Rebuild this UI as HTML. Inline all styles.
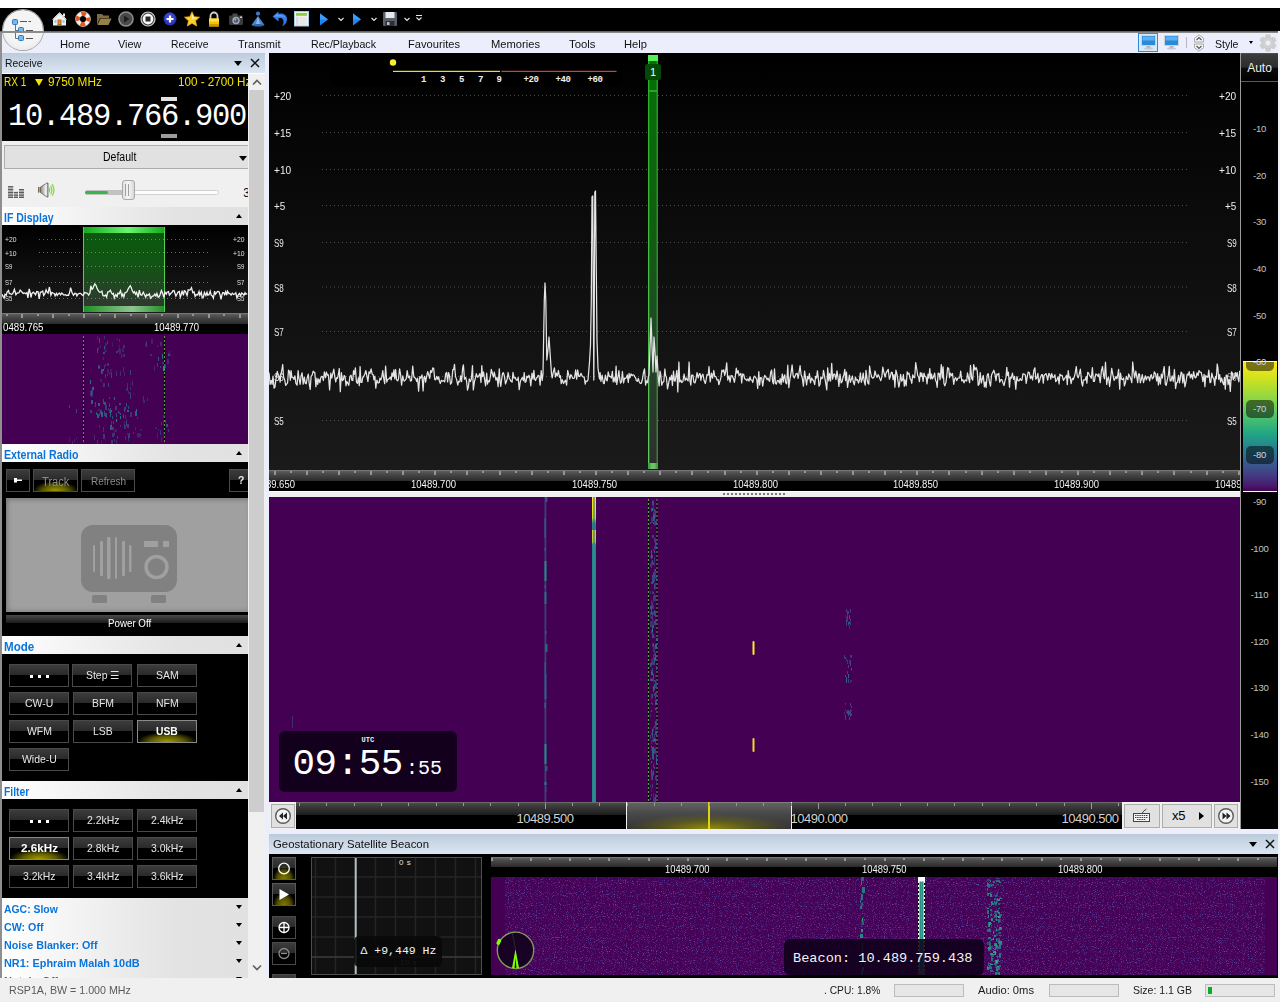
<!DOCTYPE html>
<html><head><meta charset="utf-8"><title>SDR Console</title>
<style>
html,body{margin:0;padding:0;}
body{width:1280px;height:1002px;overflow:hidden;background:#fff;font-family:"Liberation Sans",sans-serif;font-size:11px;color:#000;position:relative;}
.a{position:absolute;}
.mono{font-family:"Liberation Mono",monospace;}
.hdr{background:linear-gradient(#bccbdc,#dbe6f2);}
.sec{background:linear-gradient(90deg,#ffffff,#e3e3e3 70%,#e1e1e1);color:#0a74da;font-weight:bold;font-size:12px;}
.sec span{position:absolute;left:1px;top:4px;white-space:nowrap;transform-origin:0 0}
.tri-up{position:absolute;width:0;height:0;border-left:3px solid transparent;border-right:3px solid transparent;border-bottom:4px solid #000;}
.tri-dn{position:absolute;width:0;height:0;border-left:3px solid transparent;border-right:3px solid transparent;border-top:4px solid #000;}
.btn{position:absolute;box-sizing:border-box;border:1px solid #4a4a4a;background:linear-gradient(#3c3c3c 0,#2a2a2a 46%,#000 50%,#000 100%);color:#e6e6e6;font-size:11px;letter-spacing:-0.2px;text-align:center;}
.btn.on{border-color:#8a8a8a;color:#fff;font-weight:bold;}
.glow{position:absolute;left:0;right:0;bottom:0;height:48%;background:radial-gradient(ellipse 52% 100% at 50% 100%,rgba(170,165,0,.95),rgba(135,130,0,.7) 55%,rgba(90,90,0,0) 100%);}
.btn b,.btn i{position:relative;font-style:normal}
.lab{position:absolute;color:#e8e8e8;font-size:11px;white-space:nowrap}
.wl{position:absolute;color:#f2f2f2;font-size:11px;white-space:nowrap;transform:translateX(-50%);letter-spacing:-0.2px}
.sb{position:absolute;box-sizing:border-box;border:1px solid #bcbcbc;background:#e6e6e6;height:13px;top:6px}
</style></head><body>
<div class="a" style="left:0;top:8px;width:1280px;height:24px;background:#000"></div><div class="a" style="left:0;top:31px;width:1280px;height:22px;background:#eceefb"></div><div class="a" style="left:0;top:31px;width:1280px;height:2px;background:linear-gradient(#555,#9a9a9a)"></div><div class="a" style="left:0;top:53px;width:1280px;height:949px;background:#eceefb"></div><div class="a" style="left:0;top:32px;width:2px;height:946px;background:#8f8f8f"></div><div class="a" style="left:3px;top:10px;width:40px;height:40px;border-radius:50%;background:radial-gradient(circle at 50% 40%,#f4f4f4 60%,#dedede);box-shadow:0 0 0 1px #a8a8a8"></div><svg class="a" style="left:10px;top:16px" width="26" height="28" viewBox="0 0 26 28">
<path d="M5.5 8 V22.5 H9 M5.5 14.5 H9" stroke="#707070" fill="none" stroke-width="1"/>
<rect x="2.5" y="3.500" width="5" height="5" rx="1" fill="#7db7e8" stroke="#2e79c7"/>
<rect x="8.500" y="11.500" width="5" height="5" rx="1" fill="#7db7e8" stroke="#2e79c7"/>
<rect x="8.500" y="19.500" width="5" height="5" rx="1" fill="#7db7e8" stroke="#2e79c7"/>
<path d="M10 5.500 H17 M18.500 5.500 H21 M16 14.500 H23 M16 22.500 H23" stroke="#555" stroke-width="1"/>
</svg><div class="a" style="left:2px;top:31px;width:42px;height:1.500px;background:#8c8c8c"></div><svg class="a" style="left:52.0px;top:11px" width="16" height="16" viewBox="0 0 16 16"><path d="M1 8.500 L7.500 2 L14 8.500 V14.500 H1 Z" fill="#f1f0ea"/><path d="M0.500 8.500 L7.500 1.500 L14.500 8.500" stroke="#d8d6cc" fill="none"/><rect x="11" y="2.500" width="2" height="3" fill="#e8e8e8"/>
<rect x="5.500" y="8.500" width="4" height="5.500" fill="#c8641c"/><rect x="6.500" y="9.500" width="2" height="3.500" fill="#e08a3a"/><rect x="2.500" y="9" width="2" height="3" fill="#9cc3e6"/><rect x="10.500" y="9" width="2" height="3" fill="#9cc3e6"/><rect x="5.500" y="13.500" width="4" height="1" fill="#5a8a2a"/></svg><svg class="a" style="left:74.5px;top:11px" width="16" height="16" viewBox="0 0 16 16"><circle cx="8" cy="8" r="5.300" fill="none" stroke="#f1f1f1" stroke-width="4.400"/>
<circle cx="8" cy="8" r="5.300" fill="none" stroke="#e4561a" stroke-width="4.400" stroke-dasharray="4.700 3.625" stroke-dashoffset="2.350"/>
<circle cx="8" cy="8" r="7.500" fill="none" stroke="#c8c8c8" stroke-width=".5"/></svg><svg class="a" style="left:96.0px;top:11px" width="16" height="16" viewBox="0 0 16 16"><path d="M1 3 H6 L7.500 4.500 H13 V7 H4 L1 14 Z" fill="#7d6c3c"/><path d="M4.500 7.500 H15.500 L12.500 14 H1.500 Z" fill="#94824a"/></svg><svg class="a" style="left:118.0px;top:11px" width="16" height="16" viewBox="0 0 16 16"><circle cx="8" cy="8" r="7" fill="#4a4a4a" stroke="#8c8c8c" stroke-width="1.600"/><path d="M6 4.500 L11.500 8 L6 11.500 Z" fill="#1e1e1e"/></svg><svg class="a" style="left:140.0px;top:11px" width="16" height="16" viewBox="0 0 16 16"><circle cx="8" cy="8" r="7" fill="#3a3a3a" stroke="#d0d0d0" stroke-width="1.200"/><circle cx="8" cy="8" r="5.400" fill="#fafafa"/><rect x="5.500" y="5.500" width="5" height="5" fill="#2a2a2a"/></svg><svg class="a" style="left:162.0px;top:11px" width="16" height="16" viewBox="0 0 16 16"><circle cx="8" cy="8" r="6.500" fill="#2b35b8"/><circle cx="8" cy="6.500" r="5" fill="#4552d8" opacity=".6"/><path d="M8 4.500 V11.500 M4.500 8 H11.500" stroke="#fff" stroke-width="2.200"/></svg><svg class="a" style="left:184.0px;top:11px" width="16" height="16" viewBox="0 0 16 16"><path d="M8 0.800 L10.200 5.700 L15.500 6.200 L11.500 9.800 L12.700 15 L8 12.300 L3.300 15 L4.500 9.800 L0.500 6.200 L5.800 5.700 Z" fill="#ffd12e" stroke="#f0a400" stroke-width=".8"/><path d="M8 2.500 L9.500 6.300 L13.500 6.800 L8 8 Z" fill="#fff3a8"/></svg><svg class="a" style="left:206.0px;top:11px" width="16" height="16" viewBox="0 0 16 16"><path d="M4.500 8 V5 A3.500 3.500 0 0 1 11.500 5 V8" stroke="#cfcfcf" stroke-width="1.800" fill="none"/><rect x="3" y="7.500" width="10" height="8" rx="1" fill="#f2c400"/><rect x="3" y="7.500" width="10" height="3" fill="#ffe04a"/><rect x="3" y="13" width="10" height="2.500" fill="#c99a00"/></svg><svg class="a" style="left:228.0px;top:11px" width="16" height="16" viewBox="0 0 16 16"><rect x="1" y="4.500" width="14" height="9.500" rx="1.500" fill="#3c3c3c"/><rect x="4.500" y="2.500" width="5" height="3" fill="#4a4a4a"/><rect x="12" y="5.500" width="2" height="1.500" fill="#cfcfcf"/><circle cx="8" cy="9.500" r="3.700" fill="#a8a8a8"/><circle cx="8" cy="9.500" r="2.300" fill="#3d5f8a"/><circle cx="7.200" cy="8.700" r=".8" fill="#cfe0f5"/></svg><svg class="a" style="left:250.0px;top:11px" width="16" height="16" viewBox="0 0 16 16"><circle cx="8" cy="2.600" r="2.100" fill="#3f78c4"/><path d="M8 5 L14.500 14 Q8 16.500 1.500 14 Z" fill="#4a86d2"/><path d="M8 5.500 L10 13 L8 14.500 L6 13 Z" fill="#8db6e8"/><ellipse cx="8" cy="14.300" rx="5.500" ry="1.200" fill="#2f62aa"/></svg><svg class="a" style="left:272.0px;top:11px" width="16" height="16" viewBox="0 0 16 16"><path d="M0.500 5.500 L6.500 0.500 L6.500 3 C11 1.500 15.500 4.500 15 9 C14.600 12 12.500 14.200 10 15.500 C11.800 12.800 12 10.200 10.800 8.400 C9.800 7 8.200 6.800 6.500 7.200 L6.500 10.500 Z" fill="#2f7be8"/><path d="M2 5.500 L6 2 L6 4 C10 3 13.500 5 14 8 C12.500 5.500 9.500 5 6.500 5.800 Z" fill="#5b9bf5"/></svg><svg class="a" style="left:294.0px;top:11px" width="16" height="16" viewBox="0 0 16 16"><rect x="0.500" y="0.500" width="14" height="14.500" fill="#f2f2f2" stroke="#9ecbe8"/><rect x="2" y="2" width="11" height="2.800" fill="#86d23c"/><rect x="2" y="5.800" width="2.500" height="8" fill="#dcdcdc"/><rect x="5.500" y="5.800" width="7.500" height="8" fill="#e8e8e8"/></svg><svg class="a" style="left:316.0px;top:11px" width="16" height="16" viewBox="0 0 16 16"><path d="M4 2.500 L12 8.500 L4 14.500 Z" fill="#1f86f0"/><path d="M4 2.500 L12 8.500 L4 8.500 Z" fill="#3b9cff"/></svg><svg class="a" style="left:349.0px;top:11px" width="16" height="16" viewBox="0 0 16 16"><path d="M4 2.500 L12 8.500 L4 14.500 Z" fill="#1f86f0"/><path d="M4 2.500 L12 8.500 L4 8.500 Z" fill="#3b9cff"/></svg><svg class="a" style="left:336.5px;top:15px" width="8" height="8" viewBox="0 0 8 8"><path d="M1.500 3 L4 5.500 L6.500 3" stroke="#e8e8e8" fill="none" stroke-width="1.100"/></svg><svg class="a" style="left:369.5px;top:15px" width="8" height="8" viewBox="0 0 8 8"><path d="M1.500 3 L4 5.500 L6.500 3" stroke="#e8e8e8" fill="none" stroke-width="1.100"/></svg><svg class="a" style="left:402.5px;top:15px" width="8" height="8" viewBox="0 0 8 8"><path d="M1.500 3 L4 5.500 L6.500 3" stroke="#e8e8e8" fill="none" stroke-width="1.100"/></svg><svg class="a" style="left:382.0px;top:11px" width="16" height="16" viewBox="0 0 16 16"><rect x="1" y="1" width="14" height="14" rx="1" fill="#5a6068"/><rect x="3.500" y="1" width="9" height="6" fill="#e6e9ee"/><rect x="3.500" y="10" width="9" height="5" fill="#2c3036"/><rect x="5" y="11" width="2.500" height="3" fill="#b8bcc4"/></svg><svg class="a" style="left:414.5px;top:14px" width="8" height="8" viewBox="0 0 8 8"><path d="M1 1.500 H7" stroke="#e8e8e8" stroke-width="1"/><path d="M1.500 3.500 L4 6 L6.500 3.500" stroke="#e8e8e8" fill="none" stroke-width="1.100"/></svg><div class="a" style="left:60.00px;top:38px;font-size:11.5px;color:#111;white-space:nowrap;transform-origin:0 0;transform:scaleX(0.9780);">Home</div><div class="a" style="left:118.00px;top:38px;font-size:11.5px;color:#111;white-space:nowrap;transform-origin:0 0;transform:scaleX(0.9507);">View</div><div class="a" style="left:171.00px;top:38px;font-size:11.5px;color:#111;white-space:nowrap;transform-origin:0 0;transform:scaleX(0.9026);">Receive</div><div class="a" style="left:238.00px;top:38px;font-size:11.5px;color:#111;white-space:nowrap;transform-origin:0 0;transform:scaleX(0.9594);">Transmit</div><div class="a" style="left:311.00px;top:38px;font-size:11.5px;color:#111;white-space:nowrap;transform-origin:0 0;transform:scaleX(0.9245);">Rec/Playback</div><div class="a" style="left:407.50px;top:38px;font-size:11.5px;color:#111;white-space:nowrap;transform-origin:0 0;transform:scaleX(0.9686);">Favourites</div><div class="a" style="left:490.50px;top:38px;font-size:11.5px;color:#111;white-space:nowrap;transform-origin:0 0;transform:scaleX(0.9707);">Memories</div><div class="a" style="left:568.50px;top:38px;font-size:11.5px;color:#111;white-space:nowrap;transform-origin:0 0;transform:scaleX(0.9871);">Tools</div><div class="a" style="left:624.00px;top:38px;font-size:11.5px;color:#111;white-space:nowrap;transform-origin:0 0;transform:scaleX(0.9725);">Help</div><div class="a" style="left:1138px;top:33px;width:20px;height:19px;box-sizing:border-box;border:1px solid #2d89e0;background:#d8e9fa"></div><svg class="a" style="left:1141px;top:35px" width="15" height="15" viewBox="0 0 15 15"><rect x="0.500" y="0.500" width="14" height="10" fill="#2a8ad8" stroke="#c9d4de"/><rect x="1.500" y="1.500" width="12" height="4" fill="#5ab0f0"/><rect x="5.500" y="11" width="4" height="2" fill="#b0b6bc"/><ellipse cx="7.500" cy="13.500" rx="4.500" ry="1" fill="#c4c9ce"/></svg><svg class="a" style="left:1164px;top:35px" width="15" height="15" viewBox="0 0 15 15"><rect x="0.500" y="0.500" width="14" height="10" fill="#2a8ad8" stroke="#c9d4de"/><rect x="1.500" y="1.500" width="12" height="4" fill="#5ab0f0"/><rect x="5.500" y="11" width="4" height="2" fill="#b0b6bc"/><ellipse cx="7.500" cy="13.500" rx="4.500" ry="1" fill="#c4c9ce"/></svg><div class="a" style="left:1186px;top:37px;width:1px;height:11px;background:#b5b5c0"></div><svg class="a" style="left:1193px;top:34px" width="12" height="18" viewBox="0 0 12 18"><path d="M6 .8 L10.500 4.200 V8 H1.500 V4.200 Z M6 17.200 L10.500 13.800 V10 H1.500 V13.800 Z" fill="#f4f4f4" stroke="#9a9a9a" stroke-width=".8"/><path d="M3.500 6 L6 3.500 L8.500 6 M3.500 12 L6 14.500 L8.500 12" stroke="#555" fill="none" stroke-width="1.100"/></svg><div class="a" style="left:1215.00px;top:38px;font-size:11.5px;color:#111;white-space:nowrap;transform-origin:0 0;transform:scaleX(0.9192);">Style</div><svg class="a" style="left:1259px;top:34px" width="18" height="18" viewBox="0 0 18 18"><g transform="translate(9 9)" fill="#d2d2d2" stroke="#bcbcbc" stroke-width=".5"><rect x="-2.300" y="-8.200" width="4.600" height="5" rx="1" transform="rotate(0)"/><rect x="-2.300" y="-8.200" width="4.600" height="5" rx="1" transform="rotate(60)"/><rect x="-2.300" y="-8.200" width="4.600" height="5" rx="1" transform="rotate(120)"/><rect x="-2.300" y="-8.200" width="4.600" height="5" rx="1" transform="rotate(180)"/><rect x="-2.300" y="-8.200" width="4.600" height="5" rx="1" transform="rotate(240)"/><rect x="-2.300" y="-8.200" width="4.600" height="5" rx="1" transform="rotate(300)"/><circle r="5.900"/><circle r="2.900" fill="#eceefb" stroke="#c4c4c4"/></g></svg><div class="tri-dn" style="left:1248.800px;top:41px;border-left-width:2.800px;border-right-width:2.800px;border-top-width:3.200px"></div><div class="a hdr" style="left:2px;top:53px;width:263px;height:20px"></div><div class="a" style="left:4.50px;top:57px;font-size:11.5px;color:#111;white-space:nowrap;transform-origin:0 0;transform:scaleX(0.9002);">Receive</div><div class="tri-dn" style="left:234px;top:61px;border-left-width:4.500px;border-right-width:4.500px;border-top-width:5px"></div><svg class="a" style="left:250px;top:58px" width="10" height="10" viewBox="0 0 10 10"><path d="M1 1 L9 9 M9 1 L1 9" stroke="#111" stroke-width="1.500"/></svg><div class="a" style="left:2px;top:73px;width:263px;height:905px;background:#f0f0f0"></div><div class="a" style="left:2px;top:73px;width:263px;height:1px;background:#fff"></div><div class="a" style="left:2px;top:74px;width:246px;height:67px;background:#000"></div><div class="a" style="left:3.60px;top:75px;font-size:12px;color:#f2e200;white-space:nowrap;transform-origin:0 0;transform:scaleX(0.8397);">RX 1</div><div class="a" style="left:34.500px;top:78.500px;width:0;height:0;border-left:4.700px solid transparent;border-right:4.700px solid transparent;border-top:7.500px solid #f2e200"></div><div class="a" style="left:47.50px;top:75px;font-size:12px;color:#f2e200;white-space:nowrap;transform-origin:0 0;transform:scaleX(0.9838);">9750 MHz</div><div class="a" style="left:170px;top:74px;width:78px;height:18px;overflow:hidden"><div class="a" style="left:8.30px;top:1px;font-size:12px;color:#f2e200;white-space:nowrap;transform-origin:0 0;transform:scaleX(0.9730);">100 - 2700 Hz</div></div><div class="a mono" id="bigf" style="left:8px;top:98.500px;font-size:30.500px;line-height:36px;color:#fff;letter-spacing:-1.300px;white-space:nowrap">10.489.766.900</div><div class="a" style="left:161px;top:97px;width:16px;height:4px;background:#e2e2e2"></div><div class="a" style="left:161px;top:134px;width:16px;height:4px;background:#9c9c9c"></div><div class="a" style="left:4px;top:145px;width:250px;height:24px;box-sizing:border-box;border:1px solid #adadad;background:#e1e1e1"></div><div class="a" style="left:102.70px;top:150px;font-size:12px;color:#000;white-space:nowrap;transform-origin:0 0;transform:scaleX(0.8759);">Default</div><div class="tri-dn" style="left:239px;top:156px;border-left-width:4.500px;border-right-width:4.500px;border-top-width:5px"></div><svg class="a" style="left:8px;top:185px" width="17" height="14" viewBox="0 0 17 14"><rect x="0" y="1.1" width="5.2" height="11.9" fill="#b4b4b4"/><rect x="0" y="1.15" width="5.2" height="1.100" fill="#5a5a5a"/><rect x="0" y="4.05" width="5.2" height="1.100" fill="#5a5a5a"/><rect x="0" y="6.95" width="5.2" height="1.100" fill="#5a5a5a"/><rect x="0" y="9.649999999999999" width="5.2" height="1.100" fill="#5a5a5a"/><rect x="0" y="11.85" width="5.2" height="1.100" fill="#5a5a5a"/><rect x="6" y="6.9" width="4" height="6.1000000000000005" fill="#b4b4b4"/><rect x="6" y="6.95" width="4" height="1.100" fill="#5a5a5a"/><rect x="6" y="9.649999999999999" width="4" height="1.100" fill="#5a5a5a"/><rect x="6" y="11.85" width="4" height="1.100" fill="#5a5a5a"/><rect x="11" y="3.9999999999999996" width="5" height="9.0" fill="#b4b4b4"/><rect x="11" y="4.05" width="5" height="1.100" fill="#5a5a5a"/><rect x="11" y="6.95" width="5" height="1.100" fill="#5a5a5a"/><rect x="11" y="9.649999999999999" width="5" height="1.100" fill="#5a5a5a"/><rect x="11" y="11.85" width="5" height="1.100" fill="#5a5a5a"/></svg><svg class="a" style="left:37px;top:182px" width="19" height="17" viewBox="0 0 19 17">
<defs><linearGradient id="spk" x1="0" x2="1"><stop offset="0" stop-color="#8a8a8a"/><stop offset=".45" stop-color="#c8c8c8"/><stop offset=".75" stop-color="#fafafa"/><stop offset="1" stop-color="#9a9a9a"/></linearGradient></defs>
<rect x="1" y="5" width="3" height="5.600" rx=".8" fill="#e89a10"/><rect x="1" y="5" width="1" height="5.600" fill="#7a6a50"/>
<path d="M3.500 5 L10 1 H11 V15 H10 L3.500 10.600 Z" fill="url(#spk)" stroke="#5c5c5c" stroke-width=".8"/>
<path d="M12.200 6.200 Q13.400 8 12.200 9.800 M13.800 4.200 Q16 8 13.800 11.800 M15.300 2.600 Q18.600 8 15.300 13.400" stroke="#7bdc38" fill="none" stroke-width="1.200" stroke-linecap="round"/></svg><div class="a" style="left:85px;top:190px;width:134px;height:5px;box-sizing:border-box;border:1px solid #d0d0d0;border-radius:3px;background:#fdfdfd"></div><div class="a" style="left:85px;top:190px;width:40px;height:5px;border-radius:3px;background:#c2c2c2"></div><div class="a" style="left:85px;top:191px;width:23px;height:3px;border-radius:2px;background:#39b54a"></div><div class="a" style="left:121.500px;top:180px;width:13px;height:20px;box-sizing:border-box;border:1px solid #a8a8a8;border-radius:3px;background:linear-gradient(90deg,#e2e2e2,#f6f6f6 50%,#d8d8d8)"></div><div class="a" style="left:125px;top:184px;width:1px;height:12px;background:#a0a0a0"></div><div class="a" style="left:128px;top:184px;width:1px;height:12px;background:#a0a0a0"></div><div class="a" style="left:243.200px;top:186px;width:4.800px;overflow:hidden;font-size:12px;color:#111">3</div><div class="a sec" style="left:2px;top:207px;width:246px;height:18px"><span style="left:1.600px;transform:scaleX(0.8751)">IF Display</span><div class="tri-up" style="left:234px;top:7px"></div></div><div class="a sec" style="left:2px;top:444px;width:246px;height:18px"><span style="left:1.600px;transform:scaleX(0.8867)">External Radio</span><div class="tri-up" style="left:234px;top:7px"></div></div><div class="a sec" style="left:2px;top:636px;width:246px;height:18px"><span style="left:1.600px;transform:scaleX(0.9640)">Mode</span><div class="tri-up" style="left:234px;top:7px"></div></div><div class="a sec" style="left:2px;top:781px;width:246px;height:18px"><span style="left:1.600px;transform:scaleX(0.8590)">Filter</span><div class="tri-up" style="left:234px;top:7px"></div></div><div class="a" style="left:2px;top:225px;width:246px;height:88px;background:linear-gradient(#000,#1b1b1b);overflow:hidden"><svg class="a" style="left:0;top:0" width="246" height="88" viewBox="2 225 246 88"><rect x="83" y="233" width="82" height="73" fill="#0f6a12" opacity=".82"/><defs><linearGradient id="gfade" x1="0" x2="0" y1="0" y2="1"><stop offset="0" stop-color="#0a5a0a" stop-opacity="0"/><stop offset=".55" stop-color="#2a3a2a" stop-opacity=".35"/><stop offset="1" stop-color="#343434" stop-opacity=".92"/></linearGradient><linearGradient id="gtop" x1="0" x2="1"><stop offset="0" stop-color="#12a81a"/><stop offset=".55" stop-color="#6cf56c"/><stop offset="1" stop-color="#12a81a"/></linearGradient><linearGradient id="gbot" x1="0" x2="1"><stop offset="0" stop-color="#1f8f25"/><stop offset=".6" stop-color="#8fc48f"/><stop offset="1" stop-color="#1f8f25"/></linearGradient></defs><rect x="83" y="233" width="82" height="73" fill="url(#gfade)"/><rect x="83" y="227" width="82" height="6" fill="url(#gtop)"/><rect x="83" y="306" width="82" height="6" fill="url(#gbot)"/><rect x="83" y="227" width="1" height="85" fill="#52d152"/><rect x="164" y="227" width="1" height="85" fill="#52d152"/><line x1="39" y1="239.5" x2="209" y2="239.5" stroke="#a8a8a8" stroke-width="1" stroke-dasharray="1 3" opacity="0.6"/><line x1="39" y1="252.5" x2="209" y2="252.5" stroke="#a8a8a8" stroke-width="1" stroke-dasharray="1 3" opacity="0.6"/><line x1="39" y1="266.5" x2="209" y2="266.5" stroke="#a8a8a8" stroke-width="1" stroke-dasharray="1 3" opacity="0.6"/><line x1="39" y1="282.5" x2="209" y2="282.5" stroke="#a8a8a8" stroke-width="1" stroke-dasharray="1 3" opacity="0.6"/><line x1="39" y1="298.5" x2="209" y2="298.5" stroke="#a8a8a8" stroke-width="1" stroke-dasharray="1 3" opacity="0.6"/><path d="M2.0 294.2 L3.2 296.6 L4.1 298.0 L5.0 294.3 L6.2 295.2 L7.1 292.0 L8.5 290.6 L9.3 293.5 L10.5 293.8 L11.7 294.5 L13.1 292.9 L14.4 289.4 L15.9 294.7 L16.8 293.3 L18.0 292.8 L19.0 292.7 L20.2 290.1 L21.7 291.7 L23.2 293.4 L24.6 292.9 L25.8 293.7 L27.0 292.6 L27.9 297.9 L29.2 288.9 L30.2 293.0 L31.0 297.5 L31.8 293.6 L33.3 292.2 L34.8 293.7 L35.6 294.8 L36.7 291.6 L38.1 291.9 L39.2 298.9 L40.3 292.3 L41.6 291.8 L42.7 291.0 L43.7 295.4 L44.9 293.7 L46.1 289.9 L47.0 292.0 L48.1 293.2 L49.4 287.0 L50.9 295.2 L52.0 292.5 L53.0 293.0 L54.2 293.4 L55.1 295.9 L56.4 293.5 L57.3 295.4 L58.4 293.7 L59.5 293.1 L60.6 294.8 L61.8 293.0 L63.0 294.2 L63.9 295.1 L65.3 294.7 L66.5 295.6 L67.6 295.2 L68.6 295.3 L69.7 292.1 L70.6 287.7 L72.0 292.5 L73.5 295.3 L74.9 293.3 L76.1 293.5 L76.9 295.9 L77.9 294.2 L79.2 293.4 L80.6 293.3 L81.9 294.8 L83.1 295.6 L84.6 292.5 L86.0 292.8 L87.3 293.2 L88.7 295.1 L90.0 292.9 L90.8 285.7 L92.0 289.4 L92.8 288.6 L93.7 286.3 L94.8 283.9 L96.1 285.6 L97.1 288.6 L98.2 290.5 L99.4 292.1 L100.6 292.2 L101.9 291.2 L102.9 295.5 L104.2 296.0 L105.6 295.0 L106.6 297.0 L107.8 291.8 L109.1 291.7 L110.4 290.3 L111.6 293.2 L112.5 294.1 L113.4 293.4 L114.3 298.0 L115.7 294.6 L117.1 296.6 L117.9 293.2 L119.1 293.8 L120.5 290.8 L121.9 296.4 L122.8 294.0 L123.9 296.9 L125.0 292.7 L126.1 292.5 L127.0 291.7 L128.2 288.8 L129.1 287.3 L130.3 285.7 L131.3 287.8 L132.2 290.6 L133.5 292.9 L134.5 291.8 L135.6 294.3 L136.6 292.4 L138.1 297.3 L139.3 290.1 L140.5 294.8 L141.8 295.3 L143.3 292.3 L144.3 294.3 L145.7 297.3 L146.7 294.6 L148.0 295.5 L149.4 293.9 L150.5 298.2 L151.4 297.3 L152.4 296.2 L153.7 295.9 L154.8 294.1 L156.0 296.0 L156.9 293.4 L158.2 297.3 L159.1 296.8 L160.1 294.5 L161.4 290.5 L162.8 293.7 L164.0 297.5 L164.9 292.0 L166.2 294.1 L167.1 292.2 L168.5 291.6 L169.4 295.1 L170.7 293.5 L171.9 292.6 L172.8 290.8 L174.0 290.6 L175.1 293.8 L175.9 296.1 L176.9 294.2 L178.0 292.1 L179.3 291.5 L180.3 297.2 L181.2 294.6 L182.1 290.7 L183.4 295.4 L184.3 290.8 L185.3 291.3 L186.3 293.5 L187.1 295.5 L188.2 289.8 L189.4 290.1 L190.4 289.7 L191.5 287.7 L192.8 292.7 L194.0 291.9 L195.1 296.4 L196.2 294.6 L197.7 294.9 L199.0 291.5 L199.8 295.2 L201.3 292.1 L202.2 297.8 L203.4 297.0 L204.4 292.5 L205.9 295.5 L207.0 292.3 L207.8 295.2 L209.0 294.7 L210.2 291.3 L211.3 295.4 L212.4 295.9 L213.4 298.1 L214.6 291.2 L215.5 294.2 L216.5 292.9 L217.4 291.6 L218.3 291.4 L219.1 292.0 L220.0 294.7 L221.0 299.4 L221.9 294.9 L222.8 292.6 L223.7 292.7 L224.7 294.6 L225.7 291.7 L226.7 295.2 L227.5 291.3 L229.0 293.7 L229.9 293.4 L231.1 295.1 L232.3 293.2 L233.7 294.5 L234.9 293.8 L235.8 292.9 L236.9 297.9 L238.1 295.2 L239.4 293.4 L240.6 295.8 L241.6 293.1 L242.7 293.8 L244.0 295.3 L245.0 292.8 L245.8 294.1 L247.2 293.6" stroke="#f2f2f2" stroke-width="1.300" fill="none"/></svg><div class="a" style="left:2.50px;top:9.5px;font-size:7.5px;color:#e0e0e0;white-space:nowrap;transform-origin:0 0;transform:scaleX(0.9040);">+20</div><div class="a" style="left:230.50px;top:9.5px;font-size:7.5px;color:#e0e0e0;white-space:nowrap;transform-origin:0 0;transform:scaleX(0.9040);">+20</div><div class="a" style="left:2.50px;top:23.5px;font-size:7.5px;color:#e0e0e0;white-space:nowrap;transform-origin:0 0;transform:scaleX(0.9040);">+10</div><div class="a" style="left:230.50px;top:23.5px;font-size:7.5px;color:#e0e0e0;white-space:nowrap;transform-origin:0 0;transform:scaleX(0.9040);">+10</div><div class="a" style="left:2.50px;top:36.5px;font-size:7.5px;color:#e0e0e0;white-space:nowrap;transform-origin:0 0;transform:scaleX(0.7958);">S9</div><div class="a" style="left:234.70px;top:36.5px;font-size:7.5px;color:#e0e0e0;white-space:nowrap;transform-origin:0 0;transform:scaleX(0.7958);">S9</div><div class="a" style="left:2.50px;top:52.5px;font-size:7.5px;color:#e0e0e0;white-space:nowrap;transform-origin:0 0;transform:scaleX(0.7958);">S7</div><div class="a" style="left:234.70px;top:52.5px;font-size:7.5px;color:#e0e0e0;white-space:nowrap;transform-origin:0 0;transform:scaleX(0.7958);">S7</div><div class="a" style="left:2.50px;top:68.5px;font-size:7.5px;color:#e0e0e0;white-space:nowrap;transform-origin:0 0;transform:scaleX(0.7958);">S5</div><div class="a" style="left:234.70px;top:68.5px;font-size:7.5px;color:#e0e0e0;white-space:nowrap;transform-origin:0 0;transform:scaleX(0.7958);">S5</div></div><div class="a" style="left:2px;top:313px;width:246px;height:11px;background:linear-gradient(#8c8c8c 0,#5e5e5e 1px,#4a4a4a 35%,#2a2a2a 100%);overflow:hidden"><div class="a" style="left:3.5px;top:1px;width:2px;height:2px;background:#959595"></div><div class="a" style="left:19.1px;top:1px;width:2px;height:4px;background:#959595"></div><div class="a" style="left:34.6px;top:1px;width:2px;height:2px;background:#959595"></div><div class="a" style="left:50.2px;top:1px;width:2px;height:4px;background:#959595"></div><div class="a" style="left:65.7px;top:1px;width:2px;height:2px;background:#959595"></div><div class="a" style="left:81.2px;top:1px;width:2px;height:4px;background:#959595"></div><div class="a" style="left:96.8px;top:1px;width:2px;height:2px;background:#959595"></div><div class="a" style="left:112.3px;top:1px;width:2px;height:4px;background:#959595"></div><div class="a" style="left:127.9px;top:1px;width:2px;height:2px;background:#959595"></div><div class="a" style="left:143.4px;top:1px;width:2px;height:4px;background:#959595"></div><div class="a" style="left:159.0px;top:1px;width:2px;height:2px;background:#959595"></div><div class="a" style="left:174.6px;top:1px;width:2px;height:4px;background:#959595"></div><div class="a" style="left:190.1px;top:1px;width:2px;height:2px;background:#959595"></div><div class="a" style="left:205.7px;top:1px;width:2px;height:4px;background:#959595"></div><div class="a" style="left:221.2px;top:1px;width:2px;height:2px;background:#959595"></div><div class="a" style="left:236.8px;top:1px;width:2px;height:4px;background:#959595"></div></div><div class="a" style="left:2px;top:324px;width:246px;height:10px;background:#000"></div><div class="a" style="left:3.00px;top:320.5px;font-size:11px;color:#fff;white-space:nowrap;transform-origin:0 0;transform:scaleX(0.8828);">0489.765</div><div class="a" style="left:154.00px;top:320.5px;font-size:11px;color:#fff;white-space:nowrap;transform-origin:0 0;transform:scaleX(0.8655);">10489.770</div><div class="a" style="left:2px;top:334px;width:246px;height:110px;background:#440154;overflow:hidden"><svg class="a" style="left:0;top:0" width="246" height="110" viewBox="2 334 246 110"><line x1="83.5" y1="336" x2="83.5" y2="442" stroke="#0a000f" stroke-width="1.200"/><line x1="83.5" y1="336" x2="83.5" y2="442" stroke="#62ae44" stroke-width="1" stroke-dasharray="2 2" opacity=".9"/><line x1="164.5" y1="336" x2="164.5" y2="442" stroke="#0a000f" stroke-width="1.200"/><line x1="164.5" y1="336" x2="164.5" y2="442" stroke="#62ae44" stroke-width="1" stroke-dasharray="2 2" opacity=".9"/><rect x="97" y="348" width="1" height="5" fill="#2c728e" opacity="0.64"/><rect x="103" y="357" width="1" height="3" fill="#3b528b" opacity="0.49"/><rect x="103" y="352" width="2" height="2" fill="#2c728e" opacity="0.69"/><rect x="105" y="343" width="2" height="3" fill="#2c728e" opacity="0.32"/><rect x="100" y="345" width="1" height="3" fill="#2c728e" opacity="0.33"/><rect x="98" y="347" width="1" height="3" fill="#3e4989" opacity="0.51"/><rect x="99" y="338" width="1" height="5" fill="#2c728e" opacity="0.70"/><rect x="104" y="336" width="1" height="3" fill="#2c728e" opacity="0.43"/><rect x="106" y="350" width="1" height="2" fill="#3e4989" opacity="0.46"/><rect x="107" y="341" width="1" height="3" fill="#33638d" opacity="0.67"/><rect x="104" y="347" width="2" height="5" fill="#414487" opacity="0.34"/><rect x="97" y="336" width="1" height="4" fill="#3b528b" opacity="0.43"/><rect x="104" y="346" width="1" height="3" fill="#33638d" opacity="0.59"/><rect x="104" y="346" width="1" height="3" fill="#2c728e" opacity="0.39"/><rect x="112" y="342" width="1" height="5" fill="#414487" opacity="0.36"/><rect x="119" y="345" width="1" height="4" fill="#3b528b" opacity="0.40"/><rect x="116" y="351" width="2" height="2" fill="#3b528b" opacity="0.70"/><rect x="122" y="348" width="2" height="4" fill="#3e4989" opacity="0.46"/><rect x="123" y="345" width="2" height="3" fill="#3b528b" opacity="0.55"/><rect x="119" y="349" width="2" height="5" fill="#2c728e" opacity="0.37"/><rect x="118" y="349" width="1" height="3" fill="#2c728e" opacity="0.41"/><rect x="123" y="354" width="2" height="3" fill="#414487" opacity="0.65"/><rect x="119" y="339" width="1" height="2" fill="#3b528b" opacity="0.51"/><rect x="121" y="354" width="1" height="4" fill="#414487" opacity="0.63"/><rect x="119" y="340" width="1" height="2" fill="#33638d" opacity="0.40"/><rect x="116" y="338" width="2" height="2" fill="#3e4989" opacity="0.40"/><rect x="104" y="365" width="1" height="4" fill="#3e4989" opacity="0.63"/><rect x="102" y="369" width="1" height="3" fill="#3b528b" opacity="0.58"/><rect x="107" y="363" width="2" height="3" fill="#26828e" opacity="0.42"/><rect x="107" y="369" width="2" height="4" fill="#3b528b" opacity="0.42"/><rect x="98" y="365" width="2" height="4" fill="#2c728e" opacity="0.47"/><rect x="103" y="369" width="1" height="2" fill="#1f9e89" opacity="0.77"/><rect x="105" y="374" width="1" height="4" fill="#3b528b" opacity="0.74"/><rect x="105" y="364" width="1" height="2" fill="#3e4989" opacity="0.69"/><rect x="98" y="366" width="2" height="2" fill="#26828e" opacity="0.44"/><rect x="101" y="369" width="1" height="5" fill="#1f9e89" opacity="0.57"/><rect x="123" y="367" width="1" height="5" fill="#414487" opacity="0.68"/><rect x="124" y="372" width="1" height="4" fill="#2c728e" opacity="0.37"/><rect x="130" y="370" width="1" height="5" fill="#2c728e" opacity="0.61"/><rect x="102" y="370" width="1" height="4" fill="#33638d" opacity="0.62"/><rect x="116" y="371" width="1" height="5" fill="#414487" opacity="0.71"/><rect x="111" y="373" width="1" height="5" fill="#33638d" opacity="0.70"/><rect x="109" y="372" width="1" height="3" fill="#33638d" opacity="0.39"/><rect x="107" y="374" width="1" height="2" fill="#3e4989" opacity="0.68"/><rect x="120" y="371" width="1" height="5" fill="#414487" opacity="0.60"/><rect x="110" y="369" width="2" height="5" fill="#3e4989" opacity="0.37"/><rect x="108" y="383" width="1" height="4" fill="#2c728e" opacity="0.45"/><rect x="100" y="379" width="2" height="3" fill="#414487" opacity="0.49"/><rect x="108" y="383" width="1" height="3" fill="#3b528b" opacity="0.69"/><rect x="103" y="383" width="2" height="4" fill="#3b528b" opacity="0.58"/><rect x="103" y="385" width="1" height="2" fill="#414487" opacity="0.52"/><rect x="130" y="387" width="1" height="3" fill="#414487" opacity="0.64"/><rect x="127" y="383" width="1" height="5" fill="#33638d" opacity="0.49"/><rect x="130" y="394" width="1" height="5" fill="#2c728e" opacity="0.53"/><rect x="132" y="381" width="1" height="5" fill="#3e4989" opacity="0.57"/><rect x="129" y="392" width="2" height="2" fill="#33638d" opacity="0.41"/><rect x="127" y="387" width="1" height="4" fill="#3e4989" opacity="0.67"/><rect x="130" y="383" width="1" height="2" fill="#414487" opacity="0.45"/><rect x="126" y="388" width="1" height="3" fill="#3b528b" opacity="0.48"/><rect x="91" y="394" width="2" height="3" fill="#3e4989" opacity="0.51"/><rect x="90" y="391" width="2" height="5" fill="#3e4989" opacity="0.73"/><rect x="90" y="380" width="1" height="4" fill="#1f9e89" opacity="0.72"/><rect x="91" y="400" width="2" height="4" fill="#2c728e" opacity="0.78"/><rect x="92" y="387" width="2" height="3" fill="#2c728e" opacity="0.87"/><rect x="91" y="390" width="2" height="5" fill="#33638d" opacity="0.64"/><rect x="111" y="410" width="1" height="2" fill="#26828e" opacity="0.93"/><rect x="98" y="409" width="2" height="2" fill="#3e4989" opacity="0.48"/><rect x="124" y="424" width="1" height="5" fill="#3e4989" opacity="0.57"/><rect x="104" y="411" width="1" height="5" fill="#26828e" opacity="0.59"/><rect x="116" y="419" width="1" height="3" fill="#1f9e89" opacity="0.83"/><rect x="118" y="411" width="1" height="2" fill="#1f9e89" opacity="0.58"/><rect x="109" y="405" width="1" height="2" fill="#3e4989" opacity="0.81"/><rect x="120" y="416" width="1" height="3" fill="#1f9e89" opacity="0.70"/><rect x="99" y="413" width="1" height="3" fill="#26828e" opacity="0.53"/><rect x="98" y="403" width="2" height="3" fill="#26828e" opacity="0.75"/><rect x="115" y="406" width="2" height="4" fill="#33638d" opacity="0.59"/><rect x="99" y="425" width="1" height="3" fill="#3b528b" opacity="0.50"/><rect x="111" y="421" width="1" height="5" fill="#3b528b" opacity="0.65"/><rect x="124" y="407" width="2" height="3" fill="#33638d" opacity="0.64"/><rect x="109" y="409" width="1" height="4" fill="#2c728e" opacity="0.49"/><rect x="90" y="410" width="2" height="3" fill="#3b528b" opacity="0.68"/><rect x="130" y="412" width="2" height="5" fill="#33638d" opacity="0.53"/><rect x="116" y="413" width="1" height="4" fill="#1f9e89" opacity="0.48"/><rect x="137" y="417" width="1" height="2" fill="#3b528b" opacity="0.60"/><rect x="96" y="412" width="1" height="3" fill="#26828e" opacity="0.62"/><rect x="108" y="408" width="1" height="3" fill="#3e4989" opacity="0.66"/><rect x="109" y="403" width="1" height="3" fill="#3b528b" opacity="0.70"/><rect x="135" y="411" width="2" height="5" fill="#26828e" opacity="0.74"/><rect x="76" y="409" width="1" height="4" fill="#3b528b" opacity="0.82"/><rect x="114" y="397" width="1" height="3" fill="#2c728e" opacity="0.89"/><rect x="103" y="399" width="1" height="5" fill="#33638d" opacity="0.81"/><rect x="120" y="413" width="1" height="2" fill="#3b528b" opacity="0.89"/><rect x="136" y="409" width="1" height="3" fill="#2c728e" opacity="0.92"/><rect x="105" y="405" width="2" height="5" fill="#26828e" opacity="0.52"/><rect x="123" y="414" width="1" height="3" fill="#1f9e89" opacity="0.49"/><rect x="98" y="416" width="1" height="2" fill="#1f9e89" opacity="0.55"/><rect x="97" y="413" width="1" height="5" fill="#3b528b" opacity="0.48"/><rect x="110" y="425" width="2" height="5" fill="#26828e" opacity="0.72"/><rect x="127" y="410" width="2" height="2" fill="#26828e" opacity="0.74"/><rect x="110" y="408" width="1" height="5" fill="#3e4989" opacity="0.93"/><rect x="119" y="403" width="2" height="2" fill="#3e4989" opacity="0.92"/><rect x="97" y="414" width="2" height="4" fill="#2c728e" opacity="0.70"/><rect x="101" y="411" width="1" height="4" fill="#3b528b" opacity="0.43"/><rect x="110" y="412" width="1" height="5" fill="#1f9e89" opacity="0.63"/><rect x="126" y="403" width="1" height="4" fill="#3b528b" opacity="0.84"/><rect x="113" y="421" width="1" height="3" fill="#3b528b" opacity="0.70"/><rect x="128" y="406" width="1" height="3" fill="#33638d" opacity="0.74"/><rect x="123" y="416" width="1" height="2" fill="#33638d" opacity="0.88"/><rect x="106" y="413" width="1" height="5" fill="#33638d" opacity="0.78"/><rect x="101" y="412" width="2" height="5" fill="#2c728e" opacity="0.83"/><rect x="69" y="405" width="1" height="3" fill="#33638d" opacity="0.68"/><rect x="100" y="410" width="2" height="4" fill="#2c728e" opacity="0.57"/><rect x="104" y="402" width="2" height="3" fill="#1f9e89" opacity="0.57"/><rect x="112" y="427" width="2" height="3" fill="#1f9e89" opacity="0.45"/><rect x="119" y="412" width="1" height="2" fill="#26828e" opacity="0.45"/><rect x="112" y="416" width="1" height="3" fill="#26828e" opacity="0.55"/><rect x="124" y="409" width="1" height="3" fill="#2c728e" opacity="0.61"/><rect x="109" y="397" width="1" height="2" fill="#3e4989" opacity="0.85"/><rect x="95" y="402" width="1" height="5" fill="#3e4989" opacity="0.82"/><rect x="105" y="413" width="1" height="4" fill="#2c728e" opacity="0.71"/><rect x="125" y="415" width="1" height="4" fill="#2c728e" opacity="0.40"/><rect x="126" y="421" width="1" height="5" fill="#2c728e" opacity="0.61"/><rect x="126" y="419" width="1" height="2" fill="#3e4989" opacity="0.45"/><rect x="124" y="421" width="1" height="5" fill="#3e4989" opacity="0.48"/><rect x="127" y="424" width="2" height="4" fill="#3e4989" opacity="0.76"/><rect x="124" y="425" width="2" height="4" fill="#414487" opacity="0.59"/><rect x="128" y="436" width="1" height="5" fill="#2c728e" opacity="0.41"/><rect x="97" y="440" width="1" height="5" fill="#2c728e" opacity="0.46"/><rect x="115" y="429" width="2" height="3" fill="#33638d" opacity="0.35"/><rect x="74" y="439" width="1" height="3" fill="#2c728e" opacity="0.34"/><rect x="116" y="440" width="1" height="5" fill="#3b528b" opacity="0.54"/><rect x="101" y="440" width="1" height="4" fill="#3b528b" opacity="0.32"/><rect x="103" y="434" width="2" height="5" fill="#33638d" opacity="0.59"/><rect x="69" y="437" width="1" height="5" fill="#414487" opacity="0.45"/><rect x="114" y="431" width="1" height="5" fill="#414487" opacity="0.52"/><rect x="103" y="427" width="1" height="5" fill="#3e4989" opacity="0.64"/><rect x="120" y="425" width="1" height="2" fill="#2c728e" opacity="0.45"/><rect x="117" y="436" width="1" height="3" fill="#33638d" opacity="0.60"/><rect x="125" y="436" width="1" height="4" fill="#33638d" opacity="0.46"/><rect x="94" y="435" width="1" height="5" fill="#3e4989" opacity="0.60"/><rect x="105" y="439" width="1" height="2" fill="#414487" opacity="0.32"/><rect x="76" y="437" width="1" height="2" fill="#33638d" opacity="0.39"/><rect x="111" y="440" width="2" height="5" fill="#2c728e" opacity="0.51"/><rect x="72" y="441" width="1" height="3" fill="#3e4989" opacity="0.56"/><rect x="129" y="433" width="1" height="5" fill="#414487" opacity="0.67"/><rect x="128" y="434" width="1" height="5" fill="#3b528b" opacity="0.40"/><rect x="140" y="434" width="1" height="2" fill="#33638d" opacity="0.66"/><rect x="135" y="427" width="1" height="3" fill="#414487" opacity="0.55"/><rect x="114" y="439" width="1" height="3" fill="#3e4989" opacity="0.66"/><rect x="112" y="433" width="2" height="4" fill="#2c728e" opacity="0.52"/><rect x="163" y="367" width="1" height="3" fill="#33638d" opacity="0.77"/><rect x="162" y="362" width="2" height="2" fill="#3e4989" opacity="0.71"/><rect x="164" y="364" width="2" height="4" fill="#3b528b" opacity="0.75"/><rect x="154" y="366" width="1" height="5" fill="#33638d" opacity="0.40"/><rect x="157" y="363" width="1" height="4" fill="#2c728e" opacity="0.57"/><rect x="150" y="354" width="2" height="2" fill="#2c728e" opacity="0.42"/><rect x="163" y="366" width="2" height="5" fill="#1f9e89" opacity="0.83"/><rect x="162" y="354" width="1" height="5" fill="#1f9e89" opacity="0.71"/><rect x="160" y="366" width="1" height="2" fill="#1f9e89" opacity="0.48"/><rect x="158" y="357" width="1" height="4" fill="#2c728e" opacity="0.74"/><rect x="168" y="353" width="1" height="3" fill="#414487" opacity="0.68"/><rect x="167" y="359" width="2" height="5" fill="#3e4989" opacity="0.56"/><rect x="168" y="354" width="2" height="2" fill="#33638d" opacity="0.66"/><rect x="169" y="351" width="1" height="2" fill="#414487" opacity="0.62"/><rect x="170" y="354" width="1" height="2" fill="#414487" opacity="0.54"/><rect x="168" y="429" width="1" height="3" fill="#33638d" opacity="0.65"/><rect x="163" y="420" width="1" height="5" fill="#2c728e" opacity="0.34"/><rect x="158" y="429" width="1" height="2" fill="#3e4989" opacity="0.47"/><rect x="160" y="430" width="1" height="5" fill="#33638d" opacity="0.55"/><rect x="163" y="415" width="2" height="3" fill="#3e4989" opacity="0.65"/><rect x="165" y="420" width="1" height="3" fill="#2c728e" opacity="0.63"/><rect x="166" y="424" width="2" height="3" fill="#2c728e" opacity="0.73"/><rect x="161" y="422" width="1" height="3" fill="#33638d" opacity="0.53"/><rect x="130" y="393" width="1" height="4" fill="#3e4989" opacity="0.42"/><rect x="147" y="398" width="1" height="3" fill="#2c728e" opacity="0.45"/><rect x="128" y="391" width="1" height="3" fill="#3e4989" opacity="0.47"/><rect x="143" y="396" width="1" height="4" fill="#33638d" opacity="0.52"/><rect x="133" y="393" width="2" height="2" fill="#414487" opacity="0.28"/><rect x="143" y="400" width="2" height="3" fill="#3e4989" opacity="0.52"/><rect x="155" y="427" width="2" height="2" fill="#33638d" opacity="0.34"/><rect x="133" y="432" width="1" height="2" fill="#2c728e" opacity="0.40"/><rect x="137" y="433" width="1" height="4" fill="#3b528b" opacity="0.48"/><rect x="157" y="433" width="1" height="5" fill="#414487" opacity="0.47"/><rect x="128" y="433" width="2" height="5" fill="#3e4989" opacity="0.43"/><rect x="163" y="432" width="2" height="5" fill="#414487" opacity="0.31"/><rect x="161" y="437" width="1" height="5" fill="#414487" opacity="0.57"/><rect x="138" y="433" width="2" height="5" fill="#414487" opacity="0.47"/><rect x="140" y="429" width="2" height="2" fill="#33638d" opacity="0.31"/><rect x="127" y="433" width="1" height="2" fill="#414487" opacity="0.50"/><rect x="146" y="341" width="1" height="5" fill="#33638d" opacity="0.56"/><rect x="160" y="342" width="2" height="4" fill="#2c728e" opacity="0.41"/><rect x="151" y="339" width="2" height="5" fill="#2c728e" opacity="0.31"/><rect x="157" y="345" width="1" height="2" fill="#2c728e" opacity="0.46"/><rect x="145" y="343" width="2" height="4" fill="#3b528b" opacity="0.38"/></svg></div><div class="a" style="left:2px;top:462px;width:246px;height:174px;background:#000"></div><div class="btn" style="left:6px;top:469px;width:24px;height:23px;"></div><svg class="a" style="left:13px;top:477px" width="10" height="7" viewBox="0 0 10 7"><path d="M1 1 H4 L4 2.500 H9 V4 H4 V5.500 H1 Z" fill="#fff"/></svg><div class="btn on" style="left:33px;top:469px;width:45px;height:23px;border-color:#4a4a4a;"><div class="glow"></div></div><div class="a" style="left:41.80px;top:475px;font-size:12.5px;color:#8c8c8c;white-space:nowrap;transform-origin:0 0;transform:scaleX(0.8900);">Track</div><div class="btn" style="left:81px;top:469px;width:54px;height:23px;border-color:#4a4a4a;"></div><div class="a" style="left:90.50px;top:474.5px;font-size:11.5px;color:#8c8c8c;white-space:nowrap;transform-origin:0 0;transform:scaleX(0.8693);">Refresh</div><div class="btn" style="left:229px;top:469px;width:24px;height:23px;"></div><div class="a" style="left:237.81px;top:473.8805px;font-size:11px;font-weight:bold;color:#e6e6e6;white-space:nowrap;transform-origin:0 0;transform:scaleX(0.9500);">?</div><div class="a" style="left:6px;top:498px;width:242px;height:114px;background:#a0a0a0;box-shadow:inset 3px 3px 4px -1px #7c7c7c, inset 0 -3px 4px -1px #8a8a8a"></div><svg class="a" style="left:81px;top:524px" width="97" height="80" viewBox="0 0 97 80"><g fill="#818181">
<rect x="0" y="1" width="96" height="67" rx="12"/><rect x="11" y="71" width="15" height="8" rx="1.500"/><rect x="70" y="71" width="15" height="8" rx="1.500"/></g>
<g fill="#a0a0a0"><rect x="12" y="21" width="2" height="27" rx="1"/><rect x="19" y="17" width="3" height="35" rx="1"/><rect x="26" y="13" width="3.500" height="42" rx="1"/><rect x="34" y="13" width="2" height="42" rx="1"/><rect x="41" y="17" width="3" height="35" rx="1"/><rect x="48" y="21" width="2.500" height="27" rx="1"/>
<rect x="63" y="17" width="14" height="6"/><rect x="82" y="17" width="6" height="6"/></g>
<circle cx="75.500" cy="43" r="10.500" fill="none" stroke="#a0a0a0" stroke-width="3.500"/></svg><div class="a" style="left:6px;top:615px;width:242px;height:8px;background:linear-gradient(#4a4a4a,#1a1a1a)"></div><div class="a" style="left:107.60px;top:616.8px;font-size:11px;color:#fff;white-space:nowrap;transform-origin:0 0;transform:scaleX(0.8870);">Power Off</div><div class="a" style="left:2px;top:654px;width:246px;height:127px;background:#000"></div><div class="btn" style="left:9px;top:664px;width:60px;height:23px;"><div class="a" style="left:20px;top:10px;width:2.500px;height:2.500px;background:#fff;box-shadow:8px 0 #fff,16px 0 #fff"></div></div><div class="btn" style="left:72px;top:664px;width:60px;height:23px;"></div><div class="a" style="left:85.88px;top:668.8805000000001px;font-size:11px;color:#e6e6e6;white-space:nowrap;transform-origin:0 0;transform:scaleX(0.9500);">Step ☰</div><div class="btn" style="left:137px;top:664px;width:60px;height:23px;"></div><div class="a" style="left:155.68px;top:668.8805000000001px;font-size:11px;color:#e6e6e6;white-space:nowrap;transform-origin:0 0;transform:scaleX(0.9500);">SAM</div><div class="btn" style="left:9px;top:692px;width:60px;height:23px;"></div><div class="a" style="left:24.88px;top:696.8805000000001px;font-size:11px;color:#e6e6e6;white-space:nowrap;transform-origin:0 0;transform:scaleX(0.9500);">CW-U</div><div class="btn" style="left:73px;top:692px;width:60px;height:23px;"></div><div class="a" style="left:91.97px;top:696.8805000000001px;font-size:11px;color:#e6e6e6;white-space:nowrap;transform-origin:0 0;transform:scaleX(0.9500);">BFM</div><div class="btn" style="left:137px;top:692px;width:60px;height:23px;"></div><div class="a" style="left:155.68px;top:696.8805000000001px;font-size:11px;color:#e6e6e6;white-space:nowrap;transform-origin:0 0;transform:scaleX(0.9500);">NFM</div><div class="btn" style="left:9px;top:720px;width:60px;height:23px;"></div><div class="a" style="left:26.52px;top:724.8805000000001px;font-size:11px;color:#e6e6e6;white-space:nowrap;transform-origin:0 0;transform:scaleX(0.9500);">WFM</div><div class="btn" style="left:73px;top:720px;width:60px;height:23px;"></div><div class="a" style="left:93.12px;top:724.8805000000001px;font-size:11px;color:#e6e6e6;white-space:nowrap;transform-origin:0 0;transform:scaleX(0.9500);">LSB</div><div class="btn on" style="left:137px;top:720px;width:60px;height:23px;"><div class="glow"></div></div><div class="a" style="left:156.10px;top:724.8805000000001px;font-size:11px;font-weight:bold;color:#fff;white-space:nowrap;transform-origin:0 0;transform:scaleX(0.9386);">USB</div><div class="btn" style="left:9px;top:748px;width:60px;height:23px;"></div><div class="a" style="left:21.58px;top:752.8805000000001px;font-size:11px;color:#e6e6e6;white-space:nowrap;transform-origin:0 0;transform:scaleX(0.9500);">Wide-U</div><div class="a" style="left:2px;top:799px;width:246px;height:99px;background:#000"></div><div class="btn" style="left:9px;top:809px;width:60px;height:23px;"><div class="a" style="left:20px;top:10px;width:2.500px;height:2.500px;background:#fff;box-shadow:8px 0 #fff,16px 0 #fff"></div></div><div class="btn" style="left:73px;top:809px;width:60px;height:23px;"></div><div class="a" style="left:86.74px;top:813.8805000000001px;font-size:11px;color:#e6e6e6;white-space:nowrap;transform-origin:0 0;transform:scaleX(0.9500);">2.2kHz</div><div class="btn" style="left:137px;top:809px;width:60px;height:23px;"></div><div class="a" style="left:150.74px;top:813.8805000000001px;font-size:11px;color:#e6e6e6;white-space:nowrap;transform-origin:0 0;transform:scaleX(0.9500);">2.4kHz</div><div class="btn on" style="left:9px;top:837px;width:60px;height:23px;"><div class="glow"></div></div><div class="a" style="left:20.50px;top:841.8805000000001px;font-size:11px;font-weight:bold;color:#fff;white-space:nowrap;transform-origin:0 0;transform:scaleX(1.0617);">2.6kHz</div><div class="btn" style="left:73px;top:837px;width:60px;height:23px;"></div><div class="a" style="left:86.74px;top:841.8805000000001px;font-size:11px;color:#e6e6e6;white-space:nowrap;transform-origin:0 0;transform:scaleX(0.9500);">2.8kHz</div><div class="btn" style="left:137px;top:837px;width:60px;height:23px;"></div><div class="a" style="left:150.74px;top:841.8805000000001px;font-size:11px;color:#e6e6e6;white-space:nowrap;transform-origin:0 0;transform:scaleX(0.9500);">3.0kHz</div><div class="btn" style="left:9px;top:865px;width:60px;height:23px;"></div><div class="a" style="left:22.74px;top:869.8805000000001px;font-size:11px;color:#e6e6e6;white-space:nowrap;transform-origin:0 0;transform:scaleX(0.9500);">3.2kHz</div><div class="btn" style="left:73px;top:865px;width:60px;height:23px;"></div><div class="a" style="left:86.74px;top:869.8805000000001px;font-size:11px;color:#e6e6e6;white-space:nowrap;transform-origin:0 0;transform:scaleX(0.9500);">3.4kHz</div><div class="btn" style="left:137px;top:865px;width:60px;height:23px;"></div><div class="a" style="left:150.74px;top:869.8805000000001px;font-size:11px;color:#e6e6e6;white-space:nowrap;transform-origin:0 0;transform:scaleX(0.9500);">3.6kHz</div><div class="a" style="left:2px;top:898px;width:246px;height:80px;background:linear-gradient(90deg,#ffffff,#e3e3e3 70%,#e1e1e1)"></div><div class="a" style="left:3.50px;top:902.6px;font-size:11.5px;font-weight:bold;color:#0a74da;white-space:nowrap;transform-origin:0 0;transform:scaleX(0.9055);">AGC: Slow</div><div class="tri-dn" style="left:236px;top:905px"></div><div class="a" style="left:3.50px;top:920.6px;font-size:11.5px;font-weight:bold;color:#0a74da;white-space:nowrap;transform-origin:0 0;transform:scaleX(0.9277);">CW: Off</div><div class="tri-dn" style="left:236px;top:923px"></div><div class="a" style="left:3.50px;top:938.6px;font-size:11.5px;font-weight:bold;color:#0a74da;white-space:nowrap;transform-origin:0 0;transform:scaleX(0.9320);">Noise Blanker: Off</div><div class="tri-dn" style="left:236px;top:941px"></div><div class="a" style="left:3.50px;top:956.6px;font-size:11.5px;font-weight:bold;color:#0a74da;white-space:nowrap;transform-origin:0 0;transform:scaleX(0.9480);">NR1: Ephraim Malah 10dB</div><div class="tri-dn" style="left:236px;top:959px"></div><div class="a" style="left:3.50px;top:974.6px;font-size:11.5px;font-weight:bold;color:#0a74da;white-space:nowrap;transform-origin:0 0;transform:scaleX(0.9608);">Notch: Off</div><div class="tri-dn" style="left:236px;top:977px"></div><div class="a" style="left:248px;top:74px;width:17px;height:904px;background:#f0f0f0"></div><div class="a" style="left:249px;top:90px;width:15px;height:722px;background:#cdcdcd"></div><svg class="a" style="left:252px;top:78px" width="10" height="8" viewBox="0 0 10 8"><path d="M1 6.500 L5 2.500 L9 6.500" stroke="#606060" fill="none" stroke-width="1.600"/></svg><svg class="a" style="left:252px;top:964px" width="10" height="8" viewBox="0 0 10 8"><path d="M1 1.500 L5 5.500 L9 1.500" stroke="#606060" fill="none" stroke-width="1.600"/></svg><div class="a" style="left:269px;top:53px;width:971px;height:417px;background:linear-gradient(#000 0%,#0a0a0a 35%,#1a1a1a 100%);overflow:hidden"><svg class="a" style="left:0;top:0" width="971" height="417" viewBox="269 53 971 417"><line x1="322" y1="95.5" x2="1187" y2="95.5" stroke="#8a8a8a" stroke-width="1" stroke-dasharray="1 3" opacity="0.52"/><line x1="322" y1="132.5" x2="1187" y2="132.5" stroke="#8a8a8a" stroke-width="1" stroke-dasharray="1 3" opacity="0.52"/><line x1="322" y1="169.5" x2="1187" y2="169.5" stroke="#8a8a8a" stroke-width="1" stroke-dasharray="1 3" opacity="0.52"/><line x1="322" y1="205.5" x2="1187" y2="205.5" stroke="#8a8a8a" stroke-width="1" stroke-dasharray="1 3" opacity="0.52"/><line x1="322" y1="242.5" x2="1187" y2="242.5" stroke="#8a8a8a" stroke-width="1" stroke-dasharray="1 3" opacity="0.52"/><line x1="322" y1="287.0" x2="1187" y2="287.0" stroke="#8a8a8a" stroke-width="1" stroke-dasharray="1 3" opacity="0.52"/><line x1="322" y1="331.5" x2="1187" y2="331.5" stroke="#8a8a8a" stroke-width="1" stroke-dasharray="1 3" opacity="0.52"/><line x1="322" y1="376.5" x2="1187" y2="376.5" stroke="#8a8a8a" stroke-width="1" stroke-dasharray="1 3" opacity="0.52"/><line x1="322" y1="420.5" x2="1187" y2="420.5" stroke="#8a8a8a" stroke-width="1" stroke-dasharray="1 3" opacity="0.52"/><rect x="330" y="56" width="292" height="30" rx="8" fill="#000" opacity=".6"/><circle cx="393" cy="62.500" r="3.200" fill="#f5ee30"/><rect x="393" y="70.800" width="107" height="1.150" fill="#f4ec26"/><rect x="501.500" y="70.800" width="115" height="1.150" fill="#ee3c3c"/><defs><linearGradient id="vf" x1="0" x2="0" y1="0" y2="1"><stop offset="0" stop-color="#067006"/><stop offset=".45" stop-color="#125c12"/><stop offset=".75" stop-color="#24422a"/><stop offset="1" stop-color="#2d2f2d"/></linearGradient><linearGradient id="vfl" x1="0" x2="0" y1="0" y2="1"><stop offset="0" stop-color="#22b022"/><stop offset="1" stop-color="#62c862"/></linearGradient><linearGradient id="vfr" x1="0" x2="0" y1="0" y2="1"><stop offset="0" stop-color="#1fa01f"/><stop offset="1" stop-color="#3f7a3f"/></linearGradient></defs><rect x="648" y="55" width="10" height="414" fill="url(#vf)"/><rect x="648" y="55" width="1.300" height="414" fill="url(#vfl)"/><rect x="656.500" y="55" width="1.500" height="414" fill="url(#vfr)"/><rect x="648" y="55" width="10" height="6" fill="#55ee55"/><rect x="649" y="90" width="8" height="2" fill="#25a825"/><rect x="648" y="463" width="10" height="6" fill="#3da83d"/><rect x="650.500" y="463" width="5" height="6" fill="#6fbf6f"/><rect x="645" y="64" width="16" height="16" rx="2.500" fill="#044a04"/><path d="M269.0 372.6 L270.1 384.4 L271.2 380.4 L272.1 384.4 L273.0 376.1 L274.1 388.1 L274.9 387.3 L276.1 378.1 L277.3 371.3 L278.4 376.3 L279.3 376.2 L280.1 382.1 L281.0 374.2 L281.9 369.6 L282.7 364.5 L283.6 377.0 L284.8 380.5 L285.7 385.3 L286.8 383.9 L287.6 382.8 L288.5 370.1 L289.5 371.4 L290.3 380.3 L291.1 370.6 L291.9 377.5 L292.9 377.4 L293.9 379.3 L294.9 375.9 L295.9 383.3 L297.1 385.2 L298.1 370.6 L299.0 378.6 L300.2 384.3 L301.0 376.4 L302.1 372.8 L303.2 384.2 L304.3 377.0 L305.2 383.2 L306.2 383.8 L307.1 378.4 L308.3 374.2 L309.2 383.4 L310.2 389.4 L311.1 376.3 L312.0 375.4 L313.2 371.2 L314.1 372.3 L314.8 372.4 L315.9 386.8 L316.9 378.2 L317.7 384.3 L318.7 379.0 L319.9 382.7 L320.7 378.0 L321.4 376.4 L322.5 376.7 L323.4 380.5 L324.4 371.9 L325.6 377.6 L326.4 372.2 L327.6 375.4 L328.4 374.8 L329.6 389.9 L330.8 373.2 L331.8 378.1 L332.6 374.4 L333.8 369.1 L334.9 377.3 L335.7 381.8 L336.7 377.7 L337.5 378.3 L338.4 374.1 L339.3 368.5 L340.3 391.6 L341.4 372.6 L342.4 380.6 L343.3 379.8 L344.1 375.6 L345.0 376.2 L346.0 385.8 L346.9 381.5 L347.7 383.0 L348.8 385.3 L349.9 376.5 L351.1 375.3 L351.9 380.3 L352.8 380.5 L353.5 370.6 L354.3 374.5 L355.4 367.9 L356.4 381.8 L357.4 383.3 L358.4 377.8 L359.3 385.7 L360.1 366.5 L360.9 382.4 L361.9 382.4 L362.6 377.8 L363.7 376.5 L364.9 373.7 L365.8 370.7 L366.8 375.4 L367.9 381.7 L369.0 371.9 L370.0 373.4 L371.1 368.9 L372.3 374.4 L373.1 374.7 L374.0 379.9 L374.9 376.2 L375.8 388.2 L376.9 380.1 L378.1 383.0 L379.2 382.6 L379.9 378.2 L380.9 379.8 L381.7 377.2 L382.8 370.7 L383.7 378.4 L384.7 383.6 L385.6 366.1 L386.8 382.2 L387.5 379.5 L388.4 379.2 L389.4 378.4 L390.2 377.1 L391.2 380.0 L392.0 372.9 L393.0 376.7 L393.9 369.8 L394.8 378.9 L395.6 369.5 L396.6 379.9 L397.7 380.9 L398.5 378.9 L399.6 368.8 L400.6 374.6 L401.6 385.1 L402.8 375.9 L403.5 379.7 L404.3 381.1 L405.0 380.3 L406.2 378.8 L407.2 370.6 L408.3 377.7 L409.4 376.0 L410.5 381.0 L411.5 380.7 L412.7 366.1 L413.8 376.8 L414.8 377.8 L415.8 378.8 L416.7 381.6 L417.6 378.1 L418.6 391.1 L419.8 376.7 L420.8 378.1 L422.0 374.9 L423.1 390.9 L423.9 377.5 L424.7 376.3 L425.6 382.2 L426.8 375.6 L427.7 371.6 L428.7 374.9 L429.7 378.4 L430.6 370.7 L431.7 372.4 L432.8 367.9 L433.7 368.3 L434.7 379.4 L435.7 379.8 L436.8 376.3 L437.8 379.4 L438.7 376.8 L439.5 381.4 L440.3 383.5 L441.4 380.3 L442.4 381.2 L443.6 380.6 L444.7 381.9 L445.7 373.7 L446.7 372.4 L447.6 381.9 L448.6 372.7 L449.4 375.1 L450.5 384.1 L451.6 382.7 L452.8 369.6 L453.6 369.6 L454.5 364.3 L455.5 376.4 L456.6 379.6 L457.8 385.0 L458.6 381.4 L459.7 381.9 L460.7 375.8 L461.6 381.7 L462.6 368.2 L463.4 364.8 L464.5 379.2 L465.7 377.5 L466.6 381.3 L467.5 390.2 L468.4 386.9 L469.3 378.9 L470.4 381.6 L471.3 379.2 L472.5 365.6 L473.3 389.9 L474.5 381.2 L475.5 377.9 L476.3 373.7 L477.5 377.2 L478.7 376.0 L479.9 373.6 L481.0 382.5 L481.8 365.6 L482.6 376.6 L483.5 372.0 L484.5 378.8 L485.6 385.8 L486.7 373.2 L487.5 384.1 L488.2 380.8 L489.3 381.9 L490.5 376.0 L491.3 369.3 L492.4 373.5 L493.4 377.2 L494.3 372.1 L495.1 376.1 L496.0 380.1 L497.1 377.3 L498.1 386.6 L499.3 368.9 L500.0 381.7 L500.8 386.3 L501.5 380.3 L502.6 373.2 L503.4 372.7 L504.4 376.1 L505.5 384.0 L506.6 380.8 L507.3 378.3 L508.1 372.5 L509.3 378.5 L510.3 379.9 L511.1 381.4 L512.1 382.1 L513.0 372.3 L514.0 378.2 L515.2 377.4 L516.3 380.1 L517.4 380.2 L518.2 377.4 L519.2 389.7 L520.3 381.8 L521.2 379.4 L522.3 377.6 L523.5 380.7 L524.2 372.6 L525.1 382.3 L526.1 381.5 L526.9 376.1 L527.8 377.6 L529.0 375.2 L530.0 379.4 L530.8 385.8 L532.0 373.1 L533.0 379.1 L533.9 370.4 L534.7 379.4 L535.5 380.5 L536.5 378.0 L537.3 377.3 L538.2 375.3 L539.1 375.7 L540.1 385.2 L541.2 370.6 L542.2 380.4 L543.0 374.0 L544.3 300.0 L545.0 283.0 L545.8 300.0 L546.8 360.0 L548.0 350.0 L549.0 337.0 L550.0 352.0 L551.5 374.0 L552.2 377.8 L553.2 372.6 L554.4 367.8 L555.5 377.0 L556.3 373.2 L557.3 375.9 L558.4 370.5 L559.6 377.3 L560.4 375.7 L561.2 383.6 L562.3 379.7 L563.5 383.5 L564.4 381.9 L565.5 380.2 L566.6 385.1 L567.7 370.5 L568.8 375.2 L569.8 379.0 L570.8 374.7 L571.7 375.8 L572.7 378.4 L573.8 378.3 L574.6 377.7 L575.7 369.8 L576.7 379.2 L577.7 370.0 L578.8 376.3 L579.8 376.4 L581.0 373.3 L582.1 376.0 L583.3 377.1 L584.2 377.0 L585.2 384.2 L585.9 381.0 L586.8 381.5 L587.7 380.4 L588.0 380.0 L589.5 362.0 L590.5 345.0 L591.3 300.0 L592.0 197.0 L592.8 196.0 L593.3 300.0 L593.8 380.0 L594.3 300.0 L594.8 192.0 L595.5 191.0 L596.2 260.0 L597.0 340.0 L598.0 368.0 L599.5 379.0 L600.1 372.6 L600.9 381.3 L602.1 375.1 L603.4 383.2 L604.2 383.6 L605.4 375.1 L606.4 380.0 L607.2 380.8 L608.2 371.9 L609.3 376.5 L610.5 376.3 L611.3 378.0 L612.4 371.3 L613.2 382.0 L614.0 377.6 L615.2 382.1 L616.1 366.1 L616.8 384.5 L618.0 377.0 L618.9 370.6 L619.6 377.7 L620.5 383.1 L621.5 381.9 L622.4 371.5 L623.6 383.0 L624.6 378.1 L625.4 378.5 L626.3 377.6 L627.3 374.9 L628.3 382.5 L629.1 373.3 L629.9 377.8 L631.0 373.8 L632.1 375.8 L633.1 374.7 L634.1 375.2 L634.8 376.9 L635.6 377.7 L636.3 380.7 L637.4 381.3 L638.3 378.4 L639.3 382.0 L640.3 383.5 L641.3 383.2 L642.4 379.5 L643.4 373.0 L644.5 368.8 L645.6 385.1 L646.5 380.9 L647.5 382.6 L648.4 376.2 L649.0 375.0 L650.3 340.0 L651.0 318.0 L652.0 345.0 L653.0 372.0 L654.0 337.0 L655.0 352.0 L656.0 372.0 L657.0 356.0 L658.0 372.0 L658.1 375.5 L659.1 386.0 L660.0 371.1 L660.8 374.9 L661.7 385.2 L662.7 382.1 L663.8 381.8 L664.9 369.0 L665.6 375.5 L666.4 377.2 L667.5 389.0 L668.7 382.8 L669.7 377.4 L670.7 379.8 L671.6 375.2 L672.4 385.5 L673.5 371.2 L674.4 380.7 L675.1 381.2 L676.0 375.9 L676.9 370.3 L677.8 391.9 L678.9 362.0 L679.7 381.9 L680.7 380.1 L681.7 382.5 L682.9 381.5 L684.1 374.0 L685.2 380.3 L686.3 378.1 L687.2 379.6 L688.1 380.9 L689.1 362.0 L689.9 380.5 L690.8 385.1 L691.7 375.1 L692.9 375.2 L693.8 381.9 L695.0 382.9 L695.9 379.5 L697.0 372.7 L698.2 377.9 L699.4 373.6 L700.2 373.8 L700.9 380.5 L701.7 376.0 L702.9 374.2 L704.1 380.5 L705.3 383.5 L706.1 379.9 L707.0 374.7 L708.2 375.2 L709.0 366.5 L710.2 381.8 L711.5 373.2 L712.6 378.1 L713.8 370.5 L714.8 376.7 L715.9 376.6 L717.0 380.0 L718.1 379.5 L718.8 384.7 L719.9 381.3 L720.9 377.7 L721.9 370.1 L722.9 371.7 L723.8 369.8 L724.7 375.4 L725.6 371.8 L726.7 362.8 L727.8 380.2 L729.0 375.9 L730.1 382.2 L731.1 375.5 L732.3 375.9 L733.3 378.2 L734.4 382.4 L735.3 376.8 L736.3 368.1 L737.1 373.2 L738.1 370.7 L739.1 375.5 L740.2 374.2 L740.9 373.5 L741.7 383.0 L742.6 374.1 L743.7 374.4 L744.6 378.7 L745.9 379.4 L746.8 380.7 L747.9 378.9 L749.0 381.1 L749.9 376.8 L750.8 379.8 L751.9 380.0 L752.8 382.5 L753.8 377.1 L754.7 376.1 L755.6 377.5 L756.8 379.5 L757.7 388.5 L758.8 371.6 L759.6 385.0 L760.5 377.6 L761.7 377.8 L762.7 386.1 L763.9 378.0 L764.8 375.3 L766.0 377.5 L767.2 379.8 L768.0 378.0 L768.8 380.4 L769.6 381.3 L770.7 372.2 L771.6 370.1 L772.7 382.1 L773.5 383.9 L774.5 368.8 L775.4 383.0 L776.3 384.2 L777.3 380.7 L778.3 380.6 L779.3 383.1 L780.2 378.5 L781.1 384.5 L782.3 374.0 L783.2 382.1 L784.0 376.5 L784.8 374.8 L785.6 382.7 L786.7 383.9 L787.8 365.2 L788.8 387.7 L789.9 379.1 L791.0 373.3 L792.1 364.9 L793.2 376.2 L794.3 378.0 L795.1 376.0 L796.2 373.6 L797.2 373.4 L798.1 378.3 L798.9 373.9 L800.1 365.7 L801.1 374.8 L802.3 378.1 L803.4 386.2 L804.6 371.1 L805.6 378.4 L806.6 385.0 L807.6 376.5 L808.6 378.9 L809.4 373.5 L810.5 382.8 L811.7 377.9 L812.7 380.1 L813.5 380.3 L814.7 384.7 L815.6 376.4 L816.6 378.0 L817.4 370.8 L818.2 377.2 L819.0 386.2 L820.0 384.3 L820.9 376.9 L821.7 378.7 L822.7 377.9 L823.5 370.3 L824.6 376.5 L825.6 382.3 L826.8 389.8 L827.7 367.9 L828.7 380.9 L829.5 373.5 L830.6 381.0 L831.7 363.3 L832.6 379.1 L833.8 374.2 L834.8 374.2 L836.0 379.5 L837.0 370.8 L838.2 379.0 L838.9 386.4 L840.0 374.2 L841.1 382.9 L842.1 381.6 L842.9 378.0 L843.9 374.6 L844.8 369.4 L845.6 380.7 L846.5 372.0 L847.5 387.3 L848.4 381.5 L849.4 375.1 L850.4 382.3 L851.3 379.4 L852.4 376.0 L853.2 381.5 L854.3 384.9 L855.5 377.1 L856.4 380.1 L857.5 379.7 L858.5 383.0 L859.5 380.0 L860.4 372.9 L861.3 382.3 L862.3 378.9 L863.2 373.0 L864.2 381.4 L865.2 385.2 L866.0 370.4 L867.2 379.9 L868.0 383.3 L868.8 384.2 L869.6 366.0 L870.6 372.8 L871.8 377.3 L872.8 378.2 L874.0 377.2 L875.0 371.0 L876.0 375.0 L877.1 377.4 L878.1 374.7 L878.9 376.0 L879.8 378.4 L880.8 380.7 L881.9 376.6 L882.8 367.1 L884.0 373.0 L885.1 377.2 L886.0 373.4 L887.0 371.4 L888.2 369.4 L889.4 379.2 L890.5 375.6 L891.4 372.2 L892.3 372.6 L893.1 379.7 L894.1 374.7 L894.9 387.2 L895.9 370.2 L897.0 374.1 L898.0 381.4 L898.9 387.2 L899.8 382.1 L900.6 374.4 L901.7 381.2 L902.6 379.8 L903.4 374.5 L904.3 386.1 L905.0 379.9 L906.2 385.7 L907.2 371.8 L908.1 374.2 L909.0 373.1 L910.0 378.3 L911.0 379.8 L911.8 383.3 L912.7 374.8 L913.6 377.2 L914.7 377.8 L915.7 362.6 L916.9 370.0 L917.7 375.5 L918.6 377.0 L919.4 381.6 L920.3 372.7 L921.1 376.3 L921.9 373.0 L923.1 381.4 L924.0 373.2 L925.0 376.6 L926.2 377.4 L927.0 383.8 L928.0 374.2 L928.8 378.2 L929.8 368.6 L930.7 378.9 L931.5 374.0 L932.3 378.9 L933.4 377.1 L934.6 373.2 L935.5 380.1 L936.5 382.5 L937.2 387.3 L938.1 373.1 L939.2 373.6 L940.1 379.6 L941.3 364.6 L942.3 377.9 L943.1 366.9 L943.9 383.3 L944.8 385.9 L945.9 382.8 L946.7 376.7 L947.6 367.7 L948.7 368.3 L949.5 377.6 L950.4 373.1 L951.6 375.7 L952.5 373.5 L953.7 384.3 L954.7 378.9 L955.7 377.6 L956.7 380.7 L957.6 378.4 L958.8 378.0 L959.7 377.8 L960.7 371.2 L961.8 381.0 L963.0 379.8 L964.0 382.8 L965.2 379.9 L966.0 380.6 L966.7 381.0 L967.5 372.8 L968.6 378.2 L969.6 382.7 L970.5 365.4 L971.7 378.4 L972.7 380.1 L973.7 364.7 L974.9 370.1 L976.1 367.5 L977.2 370.8 L978.2 385.3 L979.2 384.1 L980.2 372.6 L981.3 383.0 L982.4 378.6 L983.3 375.5 L984.4 386.9 L985.3 382.1 L986.1 387.4 L987.2 375.2 L988.2 373.6 L989.3 381.2 L990.5 386.1 L991.6 374.7 L992.8 372.4 L993.8 370.2 L994.9 373.7 L996.0 380.6 L996.9 374.0 L997.7 374.8 L998.8 373.3 L999.7 382.2 L1000.8 379.7 L1001.9 379.6 L1003.1 383.2 L1004.0 385.5 L1005.0 380.9 L1006.0 377.4 L1006.8 367.4 L1007.5 375.4 L1008.4 372.1 L1009.5 387.2 L1010.3 377.4 L1011.3 378.2 L1012.4 373.2 L1013.6 379.4 L1014.6 376.4 L1015.8 389.3 L1016.9 376.6 L1018.0 380.8 L1019.2 380.7 L1020.2 378.6 L1021.2 380.3 L1022.0 380.1 L1022.9 373.8 L1024.1 374.1 L1025.3 374.9 L1026.2 383.5 L1027.1 377.7 L1028.2 372.0 L1029.4 372.8 L1030.4 378.5 L1031.5 375.9 L1032.6 380.0 L1033.8 370.6 L1034.9 367.8 L1035.8 379.2 L1036.8 378.1 L1037.9 373.4 L1038.7 382.7 L1039.5 381.0 L1040.3 377.7 L1041.5 374.9 L1042.4 374.6 L1043.3 383.1 L1044.1 375.4 L1045.1 374.6 L1045.9 373.6 L1046.8 375.8 L1047.7 380.2 L1048.9 373.4 L1050.0 375.2 L1050.8 379.2 L1051.7 373.6 L1052.9 377.5 L1054.1 377.0 L1054.9 374.8 L1055.7 381.6 L1056.9 380.0 L1058.1 376.8 L1059.1 384.0 L1059.9 374.2 L1061.1 375.7 L1062.1 375.4 L1063.4 380.4 L1064.4 378.6 L1065.5 377.3 L1066.5 375.2 L1067.3 384.6 L1068.2 370.6 L1069.2 377.8 L1070.2 377.1 L1071.1 383.7 L1072.3 378.4 L1073.3 379.5 L1074.1 377.3 L1075.0 374.1 L1076.3 366.5 L1077.2 375.8 L1078.2 377.8 L1079.2 374.4 L1080.4 369.2 L1081.7 382.7 L1082.6 386.2 L1083.4 380.1 L1084.5 379.8 L1085.3 379.8 L1086.1 376.6 L1086.9 383.1 L1087.7 372.3 L1088.6 372.9 L1089.4 375.0 L1090.5 376.8 L1091.3 378.3 L1092.4 367.6 L1093.4 381.3 L1094.4 381.3 L1095.1 377.1 L1095.9 374.0 L1097.1 374.7 L1098.1 376.5 L1098.9 373.8 L1100.2 382.6 L1101.4 370.9 L1102.5 366.5 L1103.5 374.9 L1104.4 378.8 L1105.5 362.2 L1106.7 384.4 L1107.6 379.0 L1108.5 377.0 L1109.6 386.5 L1110.4 380.1 L1111.7 368.4 L1112.9 374.8 L1114.1 380.4 L1114.9 379.0 L1116.0 376.4 L1116.8 378.7 L1117.6 376.2 L1118.6 369.4 L1119.7 389.1 L1120.5 373.2 L1121.4 379.0 L1122.5 379.6 L1123.6 378.0 L1124.4 385.9 L1125.5 382.5 L1126.3 376.4 L1127.2 378.7 L1127.9 379.7 L1128.7 374.0 L1129.7 376.2 L1130.9 379.2 L1131.8 382.6 L1132.7 362.0 L1133.6 370.6 L1134.6 377.8 L1135.8 371.1 L1136.9 377.4 L1137.7 382.7 L1138.6 373.8 L1139.5 374.1 L1140.3 382.8 L1141.3 379.4 L1142.3 374.7 L1143.5 382.7 L1144.3 379.3 L1145.4 375.8 L1146.3 379.8 L1147.5 376.9 L1148.6 376.8 L1149.7 380.9 L1150.4 376.6 L1151.3 374.6 L1152.3 378.9 L1153.5 377.3 L1154.3 371.9 L1155.5 373.8 L1156.7 380.8 L1157.6 373.6 L1158.4 385.0 L1159.3 376.9 L1160.4 384.0 L1161.3 374.2 L1162.3 378.1 L1163.4 370.9 L1164.2 366.5 L1165.3 384.1 L1166.2 385.4 L1167.2 380.4 L1168.4 374.8 L1169.3 366.3 L1170.1 380.8 L1171.0 380.8 L1172.2 375.9 L1173.3 381.5 L1174.4 369.5 L1175.6 388.5 L1176.5 383.0 L1177.5 382.0 L1178.6 375.3 L1179.5 382.9 L1180.2 378.9 L1181.1 372.2 L1182.0 373.2 L1182.8 383.0 L1183.8 374.1 L1184.9 386.9 L1186.0 381.8 L1187.2 374.1 L1188.4 375.1 L1189.2 371.7 L1190.4 377.8 L1191.5 374.3 L1192.6 379.2 L1193.6 371.6 L1194.4 375.8 L1195.2 377.8 L1196.0 377.5 L1197.0 372.8 L1198.1 375.6 L1199.0 370.7 L1200.1 372.1 L1201.2 372.4 L1202.1 376.5 L1202.9 381.7 L1204.1 374.4 L1204.9 386.6 L1205.8 375.6 L1206.8 376.6 L1207.9 377.3 L1208.8 370.1 L1210.0 382.6 L1210.8 382.1 L1211.8 373.2 L1212.9 377.7 L1213.8 378.3 L1214.8 385.3 L1215.5 376.5 L1216.3 378.8 L1217.2 364.0 L1217.9 367.7 L1218.7 379.4 L1219.7 374.6 L1220.6 382.1 L1221.6 378.0 L1222.6 381.9 L1223.7 384.7 L1224.5 377.4 L1225.3 389.2 L1226.2 375.1 L1227.2 375.5 L1228.1 384.7 L1229.2 379.3 L1230.3 391.4 L1231.5 371.8 L1232.4 373.0 L1233.2 379.4 L1234.2 378.3 L1235.4 372.6 L1236.2 376.7 L1237.2 372.5 L1238.0 378.4 L1238.9 381.8 L1239.7 370.8" stroke="#e4e4e4" stroke-width="1.250" fill="none" stroke-linejoin="round"/></svg><div class="a" style="left:4.60px;top:37px;font-size:10.5px;color:#ececec;white-space:nowrap;transform-origin:0 0;transform:scaleX(0.9657);">+20</div><div class="a" style="left:950.30px;top:37px;font-size:10.5px;color:#ececec;white-space:nowrap;transform-origin:0 0;transform:scaleX(0.9657);">+20</div><div class="a" style="left:4.60px;top:74px;font-size:10.5px;color:#ececec;white-space:nowrap;transform-origin:0 0;transform:scaleX(0.9657);">+15</div><div class="a" style="left:950.30px;top:74px;font-size:10.5px;color:#ececec;white-space:nowrap;transform-origin:0 0;transform:scaleX(0.9657);">+15</div><div class="a" style="left:4.60px;top:111px;font-size:10.5px;color:#ececec;white-space:nowrap;transform-origin:0 0;transform:scaleX(0.9657);">+10</div><div class="a" style="left:950.30px;top:111px;font-size:10.5px;color:#ececec;white-space:nowrap;transform-origin:0 0;transform:scaleX(0.9657);">+10</div><div class="a" style="left:4.60px;top:147px;font-size:10.5px;color:#ececec;white-space:nowrap;transform-origin:0 0;transform:scaleX(0.9439);">+5</div><div class="a" style="left:956.20px;top:147px;font-size:10.5px;color:#ececec;white-space:nowrap;transform-origin:0 0;transform:scaleX(0.9439);">+5</div><div class="a" style="left:4.60px;top:184px;font-size:10.5px;color:#ececec;white-space:nowrap;transform-origin:0 0;transform:scaleX(0.7631);">S9</div><div class="a" style="left:957.70px;top:184px;font-size:10.5px;color:#ececec;white-space:nowrap;transform-origin:0 0;transform:scaleX(0.7631);">S9</div><div class="a" style="left:4.60px;top:228.5px;font-size:10.5px;color:#ececec;white-space:nowrap;transform-origin:0 0;transform:scaleX(0.7631);">S8</div><div class="a" style="left:957.70px;top:228.5px;font-size:10.5px;color:#ececec;white-space:nowrap;transform-origin:0 0;transform:scaleX(0.7631);">S8</div><div class="a" style="left:4.60px;top:273px;font-size:10.5px;color:#ececec;white-space:nowrap;transform-origin:0 0;transform:scaleX(0.7631);">S7</div><div class="a" style="left:957.70px;top:273px;font-size:10.5px;color:#ececec;white-space:nowrap;transform-origin:0 0;transform:scaleX(0.7631);">S7</div><div class="a" style="left:4.60px;top:318px;font-size:10.5px;color:#ececec;white-space:nowrap;transform-origin:0 0;transform:scaleX(0.7631);">S6</div><div class="a" style="left:957.70px;top:318px;font-size:10.5px;color:#ececec;white-space:nowrap;transform-origin:0 0;transform:scaleX(0.7631);opacity:.7;">S6</div><div class="a" style="left:4.60px;top:362px;font-size:10.5px;color:#ececec;white-space:nowrap;transform-origin:0 0;transform:scaleX(0.7631);">S5</div><div class="a" style="left:957.70px;top:362px;font-size:10.5px;color:#ececec;white-space:nowrap;transform-origin:0 0;transform:scaleX(0.7631);">S5</div><div class="lab mono" style="left:154.5px;top:22px;font-size:9px;font-weight:bold;color:#f0f0f0;transform:translateX(-50%);letter-spacing:-0.4px">1</div><div class="lab mono" style="left:173.5px;top:22px;font-size:9px;font-weight:bold;color:#f0f0f0;transform:translateX(-50%);letter-spacing:-0.4px">3</div><div class="lab mono" style="left:192.5px;top:22px;font-size:9px;font-weight:bold;color:#f0f0f0;transform:translateX(-50%);letter-spacing:-0.4px">5</div><div class="lab mono" style="left:211.5px;top:22px;font-size:9px;font-weight:bold;color:#f0f0f0;transform:translateX(-50%);letter-spacing:-0.4px">7</div><div class="lab mono" style="left:230px;top:22px;font-size:9px;font-weight:bold;color:#f0f0f0;transform:translateX(-50%);letter-spacing:-0.4px">9</div><div class="lab mono" style="left:262px;top:22px;font-size:9px;font-weight:bold;color:#f0f0f0;transform:translateX(-50%);letter-spacing:-0.4px">+20</div><div class="lab mono" style="left:294px;top:22px;font-size:9px;font-weight:bold;color:#f0f0f0;transform:translateX(-50%);letter-spacing:-0.4px">+40</div><div class="lab mono" style="left:326px;top:22px;font-size:9px;font-weight:bold;color:#f0f0f0;transform:translateX(-50%);letter-spacing:-0.4px">+60</div><div class="lab" style="left:384px;top:13px;transform:translateX(-50%);color:#fff;font-size:11px">1</div></div><div class="a" style="left:269px;top:470px;width:971px;height:11px;background:linear-gradient(#8c8c8c 0,#5e5e5e 1px,#4a4a4a 35%,#2a2a2a 100%);overflow:hidden"><div class="a" style="left:4.5px;top:1px;width:2px;height:4px;background:#959595"></div><div class="a" style="left:20.6px;top:1px;width:2px;height:2px;background:#959595"></div><div class="a" style="left:36.6px;top:1px;width:2px;height:4px;background:#959595"></div><div class="a" style="left:52.7px;top:1px;width:2px;height:2px;background:#959595"></div><div class="a" style="left:68.8px;top:1px;width:2px;height:4px;background:#959595"></div><div class="a" style="left:84.8px;top:1px;width:2px;height:2px;background:#959595"></div><div class="a" style="left:100.9px;top:1px;width:2px;height:4px;background:#959595"></div><div class="a" style="left:117.0px;top:1px;width:2px;height:2px;background:#959595"></div><div class="a" style="left:133.1px;top:1px;width:2px;height:4px;background:#959595"></div><div class="a" style="left:149.1px;top:1px;width:2px;height:2px;background:#959595"></div><div class="a" style="left:165.2px;top:1px;width:2px;height:4px;background:#959595"></div><div class="a" style="left:181.3px;top:1px;width:2px;height:2px;background:#959595"></div><div class="a" style="left:197.3px;top:1px;width:2px;height:4px;background:#959595"></div><div class="a" style="left:213.4px;top:1px;width:2px;height:2px;background:#959595"></div><div class="a" style="left:229.5px;top:1px;width:2px;height:4px;background:#959595"></div><div class="a" style="left:245.5px;top:1px;width:2px;height:2px;background:#959595"></div><div class="a" style="left:261.6px;top:1px;width:2px;height:4px;background:#959595"></div><div class="a" style="left:277.7px;top:1px;width:2px;height:2px;background:#959595"></div><div class="a" style="left:293.8px;top:1px;width:2px;height:4px;background:#959595"></div><div class="a" style="left:309.8px;top:1px;width:2px;height:2px;background:#959595"></div><div class="a" style="left:325.9px;top:1px;width:2px;height:4px;background:#959595"></div><div class="a" style="left:342.0px;top:1px;width:2px;height:2px;background:#959595"></div><div class="a" style="left:358.0px;top:1px;width:2px;height:4px;background:#959595"></div><div class="a" style="left:374.1px;top:1px;width:2px;height:2px;background:#959595"></div><div class="a" style="left:390.2px;top:1px;width:2px;height:4px;background:#959595"></div><div class="a" style="left:406.2px;top:1px;width:2px;height:2px;background:#959595"></div><div class="a" style="left:422.3px;top:1px;width:2px;height:4px;background:#959595"></div><div class="a" style="left:438.4px;top:1px;width:2px;height:2px;background:#959595"></div><div class="a" style="left:454.5px;top:1px;width:2px;height:4px;background:#959595"></div><div class="a" style="left:470.5px;top:1px;width:2px;height:2px;background:#959595"></div><div class="a" style="left:486.6px;top:1px;width:2px;height:4px;background:#959595"></div><div class="a" style="left:502.7px;top:1px;width:2px;height:2px;background:#959595"></div><div class="a" style="left:518.7px;top:1px;width:2px;height:4px;background:#959595"></div><div class="a" style="left:534.8px;top:1px;width:2px;height:2px;background:#959595"></div><div class="a" style="left:550.9px;top:1px;width:2px;height:4px;background:#959595"></div><div class="a" style="left:567.0px;top:1px;width:2px;height:2px;background:#959595"></div><div class="a" style="left:583.0px;top:1px;width:2px;height:4px;background:#959595"></div><div class="a" style="left:599.1px;top:1px;width:2px;height:2px;background:#959595"></div><div class="a" style="left:615.2px;top:1px;width:2px;height:4px;background:#959595"></div><div class="a" style="left:631.2px;top:1px;width:2px;height:2px;background:#959595"></div><div class="a" style="left:647.3px;top:1px;width:2px;height:4px;background:#959595"></div><div class="a" style="left:663.4px;top:1px;width:2px;height:2px;background:#959595"></div><div class="a" style="left:679.4px;top:1px;width:2px;height:4px;background:#959595"></div><div class="a" style="left:695.5px;top:1px;width:2px;height:2px;background:#959595"></div><div class="a" style="left:711.6px;top:1px;width:2px;height:4px;background:#959595"></div><div class="a" style="left:727.7px;top:1px;width:2px;height:2px;background:#959595"></div><div class="a" style="left:743.7px;top:1px;width:2px;height:4px;background:#959595"></div><div class="a" style="left:759.8px;top:1px;width:2px;height:2px;background:#959595"></div><div class="a" style="left:775.9px;top:1px;width:2px;height:4px;background:#959595"></div><div class="a" style="left:791.9px;top:1px;width:2px;height:2px;background:#959595"></div><div class="a" style="left:808.0px;top:1px;width:2px;height:4px;background:#959595"></div><div class="a" style="left:824.1px;top:1px;width:2px;height:2px;background:#959595"></div><div class="a" style="left:840.1px;top:1px;width:2px;height:4px;background:#959595"></div><div class="a" style="left:856.2px;top:1px;width:2px;height:2px;background:#959595"></div><div class="a" style="left:872.3px;top:1px;width:2px;height:4px;background:#959595"></div><div class="a" style="left:888.4px;top:1px;width:2px;height:2px;background:#959595"></div><div class="a" style="left:904.4px;top:1px;width:2px;height:4px;background:#959595"></div><div class="a" style="left:920.5px;top:1px;width:2px;height:2px;background:#959595"></div><div class="a" style="left:936.6px;top:1px;width:2px;height:4px;background:#959595"></div><div class="a" style="left:952.6px;top:1px;width:2px;height:2px;background:#959595"></div><div class="a" style="left:968.7px;top:1px;width:2px;height:4px;background:#959595"></div></div><div class="a" style="left:269px;top:481px;width:971px;height:10px;background:#000;overflow:hidden"></div><div class="a" style="left:269px;top:470px;width:971px;height:22px;overflow:hidden"><div class="a" style="left:-19.50px;top:7.5px;font-size:11px;color:#f4f4f4;white-space:nowrap;transform-origin:0 0;transform:scaleX(0.8655);">10489.650</div><div class="a" style="left:141.50px;top:7.5px;font-size:11px;color:#f4f4f4;white-space:nowrap;transform-origin:0 0;transform:scaleX(0.8655);">10489.700</div><div class="a" style="left:302.50px;top:7.5px;font-size:11px;color:#f4f4f4;white-space:nowrap;transform-origin:0 0;transform:scaleX(0.8655);">10489.750</div><div class="a" style="left:463.50px;top:7.5px;font-size:11px;color:#f4f4f4;white-space:nowrap;transform-origin:0 0;transform:scaleX(0.8655);">10489.800</div><div class="a" style="left:623.50px;top:7.5px;font-size:11px;color:#f4f4f4;white-space:nowrap;transform-origin:0 0;transform:scaleX(0.8655);">10489.850</div><div class="a" style="left:784.50px;top:7.5px;font-size:11px;color:#f4f4f4;white-space:nowrap;transform-origin:0 0;transform:scaleX(0.8655);">10489.900</div><div class="a" style="left:945.50px;top:7.5px;font-size:11px;color:#f4f4f4;white-space:nowrap;transform-origin:0 0;transform:scaleX(0.8655);">10489.950</div></div><div class="a" style="left:269px;top:491px;width:971px;height:6px;background:#f0f0f0;border-top:1px solid #fff;box-sizing:border-box"></div><div class="a" style="left:723px;top:493px;width:62px;height:2px;background:repeating-linear-gradient(90deg,#7a7a7a 0,#7a7a7a 2px,transparent 2px,transparent 4px)"></div><div class="a" style="left:269px;top:497px;width:971px;height:305px;background:#440154;overflow:hidden"><svg class="a" style="left:0;top:0" width="971" height="305" viewBox="269 497 971 305"><rect x="544.500" y="497" width="1.800" height="305" fill="#2f6f8e" opacity=".6"/><rect x="545.5" y="497" width="2" height="5" fill="#31688e" opacity="0.72"/><rect x="544.5" y="518" width="1" height="20" fill="#31688e" opacity="0.92"/><rect x="544.5" y="548" width="1" height="3" fill="#26828e" opacity="0.70"/><rect x="544.5" y="561" width="2" height="20" fill="#1f9e89" opacity="0.81"/><rect x="544.5" y="585" width="1" height="3" fill="#26828e" opacity="0.70"/><rect x="544.5" y="592" width="2" height="12" fill="#26828e" opacity="0.71"/><rect x="545.5" y="631" width="1" height="3" fill="#31688e" opacity="0.92"/><rect x="545.5" y="644" width="2" height="8" fill="#1f9e89" opacity="0.64"/><rect x="544.5" y="662" width="1" height="12" fill="#1f9e89" opacity="0.50"/><rect x="544.5" y="674" width="2" height="20" fill="#31688e" opacity="0.75"/><rect x="544.5" y="694" width="2" height="5" fill="#31688e" opacity="0.84"/><rect x="544.5" y="703" width="1" height="5" fill="#1f9e89" opacity="0.67"/><rect x="544.5" y="744" width="2" height="20" fill="#1f9e89" opacity="0.80"/><rect x="545.5" y="766" width="2" height="5" fill="#1f9e89" opacity="0.53"/><rect x="544.5" y="782" width="2" height="3" fill="#26828e" opacity="0.89"/><rect x="545.5" y="787" width="1" height="5" fill="#31688e" opacity="0.56"/><rect x="592" y="497" width="4" height="305" fill="#26828e"/><rect x="593" y="497" width="2" height="305" fill="#2a9d86" opacity=".55"/><defs><linearGradient id="yl" x1="0" x2="0" y1="0" y2="1"><stop offset="0" stop-color="#fde725"/><stop offset=".75" stop-color="#c8e020"/><stop offset="1" stop-color="#35b779" stop-opacity="0"/></linearGradient></defs><rect x="592" y="497" width="4" height="28" fill="url(#yl)"/><rect x="592" y="530" width="4" height="16" fill="url(#yl)" opacity=".8"/><rect x="593.400" y="497" width="1.200" height="48" fill="#3b528b" opacity=".85"/><line x1="648.5" y1="499" x2="648.5" y2="802" stroke="#0a000f" stroke-width="1.200"/><line x1="648.5" y1="499" x2="648.5" y2="802" stroke="#62b052" stroke-width="1.200" stroke-dasharray="2 2" opacity=".9"/><line x1="657" y1="499" x2="657" y2="802" stroke="#0a000f" stroke-width="1.200"/><line x1="657" y1="499" x2="657" y2="802" stroke="#6f8f5a" stroke-width="1.200" stroke-dasharray="2 2" opacity=".9"/><rect x="650" y="564" width="1" height="3" fill="#3e4989" opacity="0.72"/><rect x="653" y="674" width="1" height="4" fill="#2a788e" opacity="0.69"/><rect x="652" y="730" width="1" height="6" fill="#2a788e" opacity="0.88"/><rect x="650" y="678" width="2" height="3" fill="#3b528b" opacity="0.64"/><rect x="654" y="725" width="1" height="3" fill="#2a788e" opacity="0.49"/><rect x="651" y="508" width="1" height="3" fill="#31688e" opacity="0.84"/><rect x="654" y="538" width="2" height="4" fill="#3b528b" opacity="0.67"/><rect x="651" y="550" width="1" height="6" fill="#2a788e" opacity="0.77"/><rect x="653" y="514" width="2" height="2" fill="#31688e" opacity="0.62"/><rect x="655" y="619" width="2" height="3" fill="#2a788e" opacity="0.56"/><rect x="654" y="594" width="1" height="3" fill="#3b528b" opacity="0.52"/><rect x="654" y="797" width="2" height="6" fill="#3b528b" opacity="0.49"/><rect x="654" y="652" width="2" height="4" fill="#3b528b" opacity="0.59"/><rect x="654" y="658" width="2" height="3" fill="#31688e" opacity="0.73"/><rect x="652" y="560" width="1" height="4" fill="#3b528b" opacity="0.50"/><rect x="650" y="522" width="1" height="2" fill="#3b528b" opacity="0.66"/><rect x="653" y="763" width="1" height="3" fill="#31688e" opacity="0.47"/><rect x="653" y="574" width="2" height="6" fill="#3b528b" opacity="0.66"/><rect x="651" y="616" width="1" height="3" fill="#31688e" opacity="0.47"/><rect x="651" y="612" width="2" height="3" fill="#3b528b" opacity="0.73"/><rect x="655" y="700" width="2" height="4" fill="#2a788e" opacity="0.67"/><rect x="653" y="592" width="1" height="2" fill="#2a788e" opacity="0.59"/><rect x="652" y="617" width="1" height="2" fill="#3b528b" opacity="0.53"/><rect x="653" y="686" width="1" height="6" fill="#31688e" opacity="0.90"/><rect x="651" y="630" width="2" height="4" fill="#3e4989" opacity="0.74"/><rect x="654" y="578" width="1" height="4" fill="#3b528b" opacity="0.56"/><rect x="655" y="546" width="2" height="3" fill="#2a788e" opacity="0.72"/><rect x="652" y="614" width="1" height="6" fill="#3b528b" opacity="0.65"/><rect x="654" y="584" width="1" height="6" fill="#3b528b" opacity="0.57"/><rect x="651" y="788" width="1" height="4" fill="#3e4989" opacity="0.46"/><rect x="653" y="512" width="2" height="6" fill="#3b528b" opacity="0.56"/><rect x="650" y="663" width="1" height="4" fill="#2a788e" opacity="0.65"/><rect x="655" y="611" width="1" height="6" fill="#3b528b" opacity="0.83"/><rect x="652" y="625" width="2" height="3" fill="#2a788e" opacity="0.71"/><rect x="655" y="675" width="1" height="2" fill="#3b528b" opacity="0.48"/><rect x="653" y="750" width="2" height="3" fill="#2a788e" opacity="0.48"/><rect x="655" y="682" width="2" height="6" fill="#3b528b" opacity="0.76"/><rect x="654" y="546" width="1" height="4" fill="#3e4989" opacity="0.58"/><rect x="654" y="767" width="1" height="2" fill="#2a788e" opacity="0.68"/><rect x="654" y="557" width="1" height="4" fill="#31688e" opacity="0.52"/><rect x="654" y="583" width="2" height="6" fill="#2a788e" opacity="0.46"/><rect x="651" y="608" width="1" height="6" fill="#2a788e" opacity="0.76"/><rect x="654" y="657" width="1" height="4" fill="#2a788e" opacity="0.55"/><rect x="650" y="606" width="2" height="3" fill="#31688e" opacity="0.77"/><rect x="653" y="549" width="1" height="2" fill="#3e4989" opacity="0.76"/><rect x="651" y="733" width="2" height="2" fill="#3e4989" opacity="0.63"/><rect x="656" y="781" width="1" height="2" fill="#3e4989" opacity="0.53"/><rect x="652" y="508" width="1" height="3" fill="#2a788e" opacity="0.87"/><rect x="653" y="765" width="1" height="3" fill="#3b528b" opacity="0.70"/><rect x="655" y="722" width="1" height="2" fill="#2a788e" opacity="0.63"/><rect x="651" y="662" width="1" height="3" fill="#31688e" opacity="0.86"/><rect x="656" y="727" width="2" height="3" fill="#31688e" opacity="0.55"/><rect x="653" y="611" width="2" height="4" fill="#31688e" opacity="0.52"/><rect x="654" y="684" width="1" height="6" fill="#2a788e" opacity="0.74"/><rect x="652" y="629" width="1" height="3" fill="#3b528b" opacity="0.66"/><rect x="650" y="758" width="1" height="2" fill="#3e4989" opacity="0.71"/><rect x="655" y="721" width="2" height="3" fill="#2a788e" opacity="0.62"/><rect x="652" y="501" width="2" height="4" fill="#3b528b" opacity="0.82"/><rect x="653" y="646" width="2" height="6" fill="#31688e" opacity="0.46"/><rect x="655" y="540" width="1" height="6" fill="#3e4989" opacity="0.63"/><rect x="654" y="680" width="2" height="2" fill="#3e4989" opacity="0.79"/><rect x="652" y="575" width="1" height="2" fill="#2a788e" opacity="0.72"/><rect x="652" y="755" width="2" height="4" fill="#2a788e" opacity="0.74"/><rect x="651" y="749" width="1" height="2" fill="#3b528b" opacity="0.58"/><rect x="651" y="562" width="1" height="6" fill="#2a788e" opacity="0.46"/><rect x="655" y="776" width="2" height="4" fill="#31688e" opacity="0.54"/><rect x="651" y="517" width="2" height="6" fill="#31688e" opacity="0.51"/><rect x="655" y="696" width="1" height="3" fill="#3b528b" opacity="0.77"/><rect x="653" y="661" width="2" height="4" fill="#3b528b" opacity="0.74"/><rect x="654" y="610" width="1" height="6" fill="#3b528b" opacity="0.74"/><rect x="653" y="654" width="1" height="6" fill="#2a788e" opacity="0.46"/><rect x="654" y="636" width="1" height="2" fill="#3e4989" opacity="0.67"/><rect x="651" y="740" width="1" height="4" fill="#3e4989" opacity="0.55"/><rect x="650" y="556" width="1" height="2" fill="#3b528b" opacity="0.52"/><rect x="651" y="665" width="1" height="2" fill="#3b528b" opacity="0.51"/><rect x="651" y="710" width="1" height="2" fill="#31688e" opacity="0.80"/><rect x="651" y="670" width="1" height="3" fill="#3b528b" opacity="0.71"/><rect x="655" y="656" width="2" height="2" fill="#3b528b" opacity="0.59"/><rect x="652" y="774" width="1" height="6" fill="#31688e" opacity="0.71"/><rect x="650" y="621" width="2" height="6" fill="#2a788e" opacity="0.47"/><rect x="654" y="734" width="1" height="6" fill="#3e4989" opacity="0.69"/><rect x="651" y="602" width="2" height="6" fill="#3e4989" opacity="0.63"/><rect x="655" y="516" width="1" height="2" fill="#3b528b" opacity="0.60"/><rect x="655" y="726" width="1" height="4" fill="#3e4989" opacity="0.63"/><rect x="652" y="703" width="1" height="2" fill="#3e4989" opacity="0.79"/><rect x="655" y="654" width="1" height="6" fill="#2a788e" opacity="0.70"/><rect x="652" y="560" width="1" height="4" fill="#3b528b" opacity="0.60"/><rect x="651" y="774" width="1" height="3" fill="#2a788e" opacity="0.46"/><rect x="651" y="761" width="1" height="2" fill="#2a788e" opacity="0.83"/><rect x="656" y="575" width="1" height="6" fill="#2a788e" opacity="0.58"/><rect x="654" y="750" width="2" height="4" fill="#3b528b" opacity="0.51"/><rect x="652" y="771" width="2" height="3" fill="#3e4989" opacity="0.76"/><rect x="655" y="703" width="1" height="2" fill="#2a788e" opacity="0.77"/><rect x="652" y="668" width="1" height="6" fill="#31688e" opacity="0.73"/><rect x="652" y="580" width="2" height="3" fill="#31688e" opacity="0.84"/><rect x="655" y="747" width="1" height="6" fill="#3b528b" opacity="0.55"/><rect x="651" y="771" width="1" height="4" fill="#2a788e" opacity="0.68"/><rect x="650" y="714" width="1" height="3" fill="#3b528b" opacity="0.50"/><rect x="653" y="522" width="1" height="2" fill="#2a788e" opacity="0.68"/><rect x="652" y="634" width="2" height="4" fill="#3b528b" opacity="0.80"/><rect x="656" y="666" width="1" height="4" fill="#31688e" opacity="0.77"/><rect x="655" y="794" width="1" height="6" fill="#3e4989" opacity="0.85"/><rect x="652" y="605" width="2" height="4" fill="#3e4989" opacity="0.54"/><rect x="651" y="527" width="1" height="2" fill="#3e4989" opacity="0.47"/><rect x="655" y="708" width="2" height="2" fill="#31688e" opacity="0.81"/><rect x="651" y="672" width="2" height="3" fill="#2a788e" opacity="0.83"/><rect x="654" y="551" width="1" height="2" fill="#2a788e" opacity="0.87"/><rect x="652" y="576" width="1" height="6" fill="#3b528b" opacity="0.81"/><rect x="655" y="724" width="2" height="2" fill="#2a788e" opacity="0.58"/><rect x="651" y="746" width="1" height="2" fill="#3b528b" opacity="0.88"/><rect x="656" y="638" width="2" height="3" fill="#2a788e" opacity="0.77"/><rect x="653" y="515" width="1" height="6" fill="#31688e" opacity="0.86"/><rect x="653" y="771" width="1" height="2" fill="#3b528b" opacity="0.81"/><rect x="654" y="509" width="1" height="3" fill="#31688e" opacity="0.73"/><rect x="650" y="785" width="1" height="2" fill="#3b528b" opacity="0.63"/><rect x="656" y="759" width="1" height="6" fill="#3e4989" opacity="0.53"/><rect x="652" y="729" width="1" height="4" fill="#31688e" opacity="0.87"/><rect x="651" y="776" width="2" height="4" fill="#3b528b" opacity="0.57"/><rect x="652" y="661" width="1" height="4" fill="#3b528b" opacity="0.68"/><rect x="655" y="692" width="1" height="6" fill="#3e4989" opacity="0.66"/><rect x="653" y="572" width="2" height="6" fill="#3e4989" opacity="0.80"/><rect x="654" y="595" width="2" height="6" fill="#3b528b" opacity="0.64"/><rect x="651" y="769" width="1" height="3" fill="#2a788e" opacity="0.89"/><rect x="653" y="772" width="1" height="3" fill="#3e4989" opacity="0.82"/><rect x="653" y="679" width="1" height="3" fill="#3b528b" opacity="0.57"/><rect x="655" y="693" width="2" height="2" fill="#3e4989" opacity="0.70"/><rect x="650" y="798" width="1" height="2" fill="#3b528b" opacity="0.80"/><rect x="653" y="739" width="2" height="3" fill="#3b528b" opacity="0.76"/><rect x="656" y="754" width="1" height="4" fill="#3b528b" opacity="0.76"/><rect x="653" y="505" width="1" height="6" fill="#3b528b" opacity="0.54"/><rect x="654" y="798" width="2" height="6" fill="#3b528b" opacity="0.58"/><rect x="654" y="569" width="2" height="4" fill="#3e4989" opacity="0.62"/><rect x="652" y="628" width="1" height="4" fill="#2a788e" opacity="0.88"/><rect x="651" y="556" width="1" height="3" fill="#2a788e" opacity="0.80"/><rect x="651" y="679" width="2" height="2" fill="#31688e" opacity="0.88"/><rect x="655" y="644" width="2" height="3" fill="#2a788e" opacity="0.88"/><rect x="652" y="591" width="1" height="3" fill="#2a788e" opacity="0.53"/><rect x="654" y="693" width="1" height="3" fill="#3b528b" opacity="0.81"/><rect x="652" y="535" width="2" height="3" fill="#3b528b" opacity="0.82"/><rect x="651" y="794" width="1" height="2" fill="#3b528b" opacity="0.81"/><rect x="652" y="620" width="2" height="6" fill="#3e4989" opacity="0.49"/><rect x="654" y="621" width="2" height="4" fill="#2a788e" opacity="0.61"/><rect x="653" y="596" width="1" height="6" fill="#3b528b" opacity="0.64"/><rect x="653" y="644" width="1" height="2" fill="#3b528b" opacity="0.56"/><rect x="655" y="731" width="2" height="4" fill="#2a788e" opacity="0.66"/><rect x="652" y="739" width="1" height="3" fill="#3b528b" opacity="0.62"/><rect x="652" y="784" width="1" height="4" fill="#3e4989" opacity="0.83"/><rect x="652" y="747" width="2" height="6" fill="#31688e" opacity="0.88"/><rect x="651" y="582" width="2" height="2" fill="#3b528b" opacity="0.88"/><rect x="653" y="737" width="1" height="4" fill="#3b528b" opacity="0.55"/><rect x="652" y="735" width="1" height="3" fill="#3b528b" opacity="0.79"/><rect x="650" y="612" width="1" height="6" fill="#3b528b" opacity="0.50"/><rect x="653" y="770" width="1" height="6" fill="#3b528b" opacity="0.54"/><rect x="655" y="569" width="1" height="2" fill="#2a788e" opacity="0.74"/><rect x="651" y="600" width="1" height="3" fill="#3b528b" opacity="0.50"/><rect x="652" y="752" width="2" height="4" fill="#31688e" opacity="0.76"/><rect x="655" y="573" width="1" height="6" fill="#3b528b" opacity="0.61"/><rect x="652" y="643" width="2" height="4" fill="#31688e" opacity="0.46"/><rect x="655" y="510" width="1" height="6" fill="#3e4989" opacity="0.88"/><rect x="653" y="727" width="1" height="4" fill="#31688e" opacity="0.57"/><rect x="652" y="555" width="1" height="3" fill="#3b528b" opacity="0.85"/><rect x="653" y="748" width="2" height="3" fill="#3b528b" opacity="0.73"/><rect x="651" y="508" width="1" height="4" fill="#3b528b" opacity="0.76"/><rect x="655" y="738" width="1" height="6" fill="#3b528b" opacity="0.66"/><rect x="655" y="521" width="2" height="4" fill="#2a788e" opacity="0.69"/><rect x="652" y="500" width="1" height="6" fill="#3b528b" opacity="0.52"/><rect x="653" y="644" width="1" height="2" fill="#2a788e" opacity="0.53"/><rect x="655" y="542" width="2" height="3" fill="#3b528b" opacity="0.86"/><rect x="654" y="560" width="1" height="6" fill="#3e4989" opacity="0.47"/><rect x="651" y="694" width="1" height="6" fill="#3e4989" opacity="0.58"/><rect x="652" y="562" width="2" height="3" fill="#3e4989" opacity="0.84"/><rect x="650" y="735" width="1" height="4" fill="#3b528b" opacity="0.71"/><rect x="652" y="694" width="1" height="4" fill="#2a788e" opacity="0.70"/><rect x="654" y="515" width="1" height="6" fill="#2a788e" opacity="0.67"/><rect x="653" y="754" width="1" height="6" fill="#3b528b" opacity="0.76"/><rect x="651" y="659" width="2" height="2" fill="#3e4989" opacity="0.67"/><rect x="656" y="794" width="1" height="4" fill="#3e4989" opacity="0.64"/><rect x="651" y="769" width="1" height="3" fill="#3e4989" opacity="0.66"/><rect x="654" y="520" width="1" height="6" fill="#3e4989" opacity="0.65"/><rect x="656" y="758" width="1" height="6" fill="#2a788e" opacity="0.82"/><rect x="653" y="793" width="1" height="6" fill="#3b528b" opacity="0.49"/><rect x="651" y="606" width="1" height="6" fill="#3b528b" opacity="0.84"/><rect x="653" y="798" width="1" height="6" fill="#3e4989" opacity="0.49"/><rect x="652" y="671" width="1" height="2" fill="#3e4989" opacity="0.62"/><rect x="654" y="739" width="2" height="2" fill="#2a788e" opacity="0.75"/><rect x="650" y="591" width="1" height="3" fill="#31688e" opacity="0.46"/><rect x="651" y="702" width="1" height="2" fill="#3b528b" opacity="0.76"/><rect x="651" y="561" width="1" height="2" fill="#3b528b" opacity="0.49"/><rect x="655" y="647" width="2" height="2" fill="#2a788e" opacity="0.67"/><rect x="653" y="677" width="1" height="2" fill="#31688e" opacity="0.70"/><rect x="752.500" y="641" width="2" height="14" rx="1" fill="#fde725"/><rect x="752.500" y="738" width="2" height="14" rx="1" fill="#f2d824"/><rect x="846" y="620" width="1" height="2" fill="#31688e" opacity="0.81"/><rect x="849" y="625" width="1" height="4" fill="#3e4989" opacity="0.62"/><rect x="849" y="615" width="1" height="2" fill="#3b528b" opacity="0.74"/><rect x="848" y="622" width="1" height="3" fill="#31688e" opacity="0.88"/><rect x="846" y="609" width="1" height="2" fill="#3e4989" opacity="0.62"/><rect x="849" y="617" width="1" height="2" fill="#31688e" opacity="0.76"/><rect x="846" y="622" width="1" height="4" fill="#3b528b" opacity="0.71"/><rect x="850" y="610" width="1" height="3" fill="#3e4989" opacity="0.69"/><rect x="850" y="622" width="1" height="3" fill="#3e4989" opacity="0.84"/><rect x="848" y="611" width="1" height="3" fill="#3e4989" opacity="0.85"/><rect x="849" y="621" width="1" height="3" fill="#31688e" opacity="0.55"/><rect x="845" y="615" width="1" height="2" fill="#3e4989" opacity="0.56"/><rect x="847" y="611" width="1" height="4" fill="#3b528b" opacity="0.82"/><rect x="846" y="617" width="1" height="4" fill="#3b528b" opacity="0.56"/><rect x="850" y="609" width="1" height="2" fill="#31688e" opacity="0.53"/><rect x="849" y="622" width="1" height="2" fill="#3e4989" opacity="0.65"/><rect x="847" y="619" width="1" height="3" fill="#3e4989" opacity="0.69"/><rect x="846" y="609" width="1" height="3" fill="#3e4989" opacity="0.67"/><rect x="849" y="615" width="1" height="3" fill="#3b528b" opacity="0.61"/><rect x="847" y="615" width="1" height="3" fill="#3b528b" opacity="0.56"/><rect x="850" y="619" width="1" height="2" fill="#3e4989" opacity="0.88"/><rect x="847" y="616" width="1" height="3" fill="#3e4989" opacity="0.87"/><rect x="850" y="680" width="1" height="3" fill="#3b528b" opacity="0.55"/><rect x="849" y="660" width="1" height="4" fill="#3e4989" opacity="0.53"/><rect x="851" y="655" width="1" height="3" fill="#3e4989" opacity="0.86"/><rect x="848" y="675" width="1" height="3" fill="#3b528b" opacity="0.70"/><rect x="851" y="668" width="1" height="2" fill="#31688e" opacity="0.81"/><rect x="847" y="671" width="1" height="3" fill="#3b528b" opacity="0.75"/><rect x="851" y="680" width="1" height="2" fill="#31688e" opacity="0.51"/><rect x="846" y="677" width="1" height="4" fill="#31688e" opacity="0.82"/><rect x="850" y="660" width="1" height="3" fill="#3e4989" opacity="0.87"/><rect x="846" y="659" width="1" height="2" fill="#31688e" opacity="0.65"/><rect x="848" y="674" width="1" height="4" fill="#31688e" opacity="0.86"/><rect x="845" y="675" width="1" height="2" fill="#31688e" opacity="0.73"/><rect x="845" y="657" width="1" height="2" fill="#31688e" opacity="0.68"/><rect x="848" y="679" width="1" height="4" fill="#3b528b" opacity="0.81"/><rect x="847" y="660" width="1" height="4" fill="#3e4989" opacity="0.65"/><rect x="850" y="655" width="1" height="2" fill="#3e4989" opacity="0.76"/><rect x="846" y="680" width="1" height="3" fill="#31688e" opacity="0.63"/><rect x="851" y="669" width="1" height="2" fill="#3b528b" opacity="0.60"/><rect x="846" y="678" width="1" height="4" fill="#31688e" opacity="0.79"/><rect x="844" y="655" width="1" height="4" fill="#3b528b" opacity="0.67"/><rect x="848" y="665" width="1" height="3" fill="#3e4989" opacity="0.89"/><rect x="850" y="663" width="1" height="3" fill="#31688e" opacity="0.78"/><rect x="845" y="709" width="1" height="2" fill="#3e4989" opacity="0.50"/><rect x="845" y="715" width="1" height="3" fill="#3b528b" opacity="0.79"/><rect x="851" y="713" width="1" height="3" fill="#31688e" opacity="0.66"/><rect x="850" y="709" width="1" height="2" fill="#3e4989" opacity="0.85"/><rect x="848" y="712" width="1" height="4" fill="#3b528b" opacity="0.84"/><rect x="847" y="712" width="1" height="2" fill="#3e4989" opacity="0.79"/><rect x="845" y="703" width="1" height="2" fill="#3b528b" opacity="0.65"/><rect x="850" y="703" width="1" height="3" fill="#3b528b" opacity="0.77"/><rect x="850" y="715" width="1" height="2" fill="#3b528b" opacity="0.53"/><rect x="851" y="710" width="1" height="2" fill="#3b528b" opacity="0.56"/><rect x="845" y="717" width="1" height="3" fill="#31688e" opacity="0.54"/><rect x="844" y="712" width="1" height="3" fill="#3e4989" opacity="0.61"/><rect x="851" y="706" width="1" height="2" fill="#3b528b" opacity="0.80"/><rect x="849" y="717" width="1" height="3" fill="#31688e" opacity="0.76"/><rect x="846" y="711" width="1" height="2" fill="#3e4989" opacity="0.73"/><rect x="847" y="710" width="1" height="4" fill="#3b528b" opacity="0.69"/><rect x="849" y="711" width="1" height="4" fill="#3b528b" opacity="0.88"/><rect x="850" y="712" width="1" height="4" fill="#31688e" opacity="0.61"/><rect x="848" y="710" width="1" height="4" fill="#3b528b" opacity="0.70"/><rect x="850" y="704" width="1" height="2" fill="#3e4989" opacity="0.74"/><rect x="850" y="711" width="1" height="3" fill="#3e4989" opacity="0.66"/><rect x="848" y="711" width="1" height="2" fill="#3b528b" opacity="0.87"/><rect x="292" y="716" width="1" height="12" fill="#3e4989" opacity=".6"/></svg><div class="a" style="left:10px;top:234px;width:178px;height:61px;border-radius:6px;background:rgba(12,0,22,.88)"></div><div class="a mono" style="left:92.500px;top:238.500px;font-size:7px;font-weight:bold;color:#f0f0f0">UTC</div><div class="a mono" id="clk" style="left:23.400px;top:246.800px;font-size:37.500px;line-height:40px;color:#fff;letter-spacing:-0.400px;white-space:nowrap">09:55<span style="font-size:20px;letter-spacing:0;margin-left:3px">:55</span></div></div><div class="a" style="left:269px;top:802px;width:971px;height:27px;background:#f0f0f0"></div><div class="a" style="left:296px;top:802px;width:826px;height:27px;background:#000;overflow:hidden"><div class="a" style="left:0;top:0;width:826px;height:13px;background:linear-gradient(#8a8a8a 0,#4a4a4a 1px,#3c3c3c 30%,#1c1c1c)"></div><div class="a" style="left:330px;top:0;width:166px;height:27px;box-sizing:border-box;border-left:1px solid #f0f0f0;border-right:1px solid #f0f0f0;background:linear-gradient(#9a9a9a 0,#626262 1px,#4a4a4a 40%,#333 100%)"></div><div class="a" style="left:331px;top:12px;width:164px;height:15px;background:radial-gradient(ellipse 50% 100% at 50% 100%,rgba(165,158,0,.85),rgba(125,120,0,.45) 55%,rgba(90,90,0,0) 100%)"></div><div class="a" style="left:412.300px;top:0;width:1.600px;height:27px;background:#ddd312"></div><div class="a" style="left:3.1px;top:1px;width:1px;height:3px;background:#9a9a9a"></div><div class="a" style="left:30.4px;top:1px;width:1px;height:3px;background:#9a9a9a"></div><div class="a" style="left:57.7px;top:1px;width:1px;height:3px;background:#9a9a9a"></div><div class="a" style="left:85.0px;top:1px;width:1px;height:3px;background:#9a9a9a"></div><div class="a" style="left:112.3px;top:1px;width:1px;height:3px;background:#9a9a9a"></div><div class="a" style="left:139.6px;top:1px;width:1px;height:3px;background:#9a9a9a"></div><div class="a" style="left:166.9px;top:1px;width:1px;height:3px;background:#9a9a9a"></div><div class="a" style="left:194.2px;top:1px;width:1px;height:3px;background:#9a9a9a"></div><div class="a" style="left:221.5px;top:1px;width:1px;height:3px;background:#9a9a9a"></div><div class="a" style="left:248.8px;top:1px;width:1px;height:6px;background:#9a9a9a"></div><div class="a" style="left:276.1px;top:1px;width:1px;height:3px;background:#9a9a9a"></div><div class="a" style="left:303.4px;top:1px;width:1px;height:3px;background:#9a9a9a"></div><div class="a" style="left:330.7px;top:1px;width:1px;height:3px;background:#9a9a9a"></div><div class="a" style="left:358.0px;top:1px;width:1px;height:3px;background:#9a9a9a"></div><div class="a" style="left:385.3px;top:1px;width:1px;height:3px;background:#9a9a9a"></div><div class="a" style="left:412.6px;top:1px;width:1px;height:3px;background:#9a9a9a"></div><div class="a" style="left:439.9px;top:1px;width:1px;height:3px;background:#9a9a9a"></div><div class="a" style="left:467.2px;top:1px;width:1px;height:3px;background:#9a9a9a"></div><div class="a" style="left:494.5px;top:1px;width:1px;height:3px;background:#9a9a9a"></div><div class="a" style="left:521.8px;top:1px;width:1px;height:6px;background:#9a9a9a"></div><div class="a" style="left:549.1px;top:1px;width:1px;height:3px;background:#9a9a9a"></div><div class="a" style="left:576.4px;top:1px;width:1px;height:3px;background:#9a9a9a"></div><div class="a" style="left:603.7px;top:1px;width:1px;height:3px;background:#9a9a9a"></div><div class="a" style="left:631.0px;top:1px;width:1px;height:3px;background:#9a9a9a"></div><div class="a" style="left:658.3px;top:1px;width:1px;height:3px;background:#9a9a9a"></div><div class="a" style="left:685.6px;top:1px;width:1px;height:3px;background:#9a9a9a"></div><div class="a" style="left:712.9px;top:1px;width:1px;height:3px;background:#9a9a9a"></div><div class="a" style="left:740.2px;top:1px;width:1px;height:3px;background:#9a9a9a"></div><div class="a" style="left:767.5px;top:1px;width:1px;height:3px;background:#9a9a9a"></div><div class="a" style="left:794.8px;top:1px;width:1px;height:6px;background:#9a9a9a"></div><div class="a" style="left:822.1px;top:1px;width:1px;height:3px;background:#9a9a9a"></div><div class="wl" style="left:249px;top:9px;font-size:13px;color:#d2d2d2;letter-spacing:-0.500px">10489.500</div><div class="wl" style="left:523px;top:9px;font-size:13px;color:#d2d2d2;letter-spacing:-0.500px">10490.000</div><div class="wl" style="left:794px;top:9px;font-size:13px;color:#d2d2d2;letter-spacing:-0.500px">10490.500</div></div><div class="a" style="left:271px;top:804px;width:24px;height:24px;box-sizing:border-box;border:1px solid #adadad;background:#e1e1e1"></div><div class="a" style="left:1124px;top:804px;width:36px;height:24px;box-sizing:border-box;border:1px solid #adadad;background:#e1e1e1"></div><div class="a" style="left:1162px;top:804px;width:50px;height:24px;box-sizing:border-box;border:1px solid #adadad;background:#e1e1e1"></div><div class="a" style="left:1214px;top:804px;width:24px;height:24px;box-sizing:border-box;border:1px solid #adadad;background:#e1e1e1"></div><svg class="a" style="left:274px;top:807px" width="18" height="18" viewBox="0 0 18 18"><circle cx="9" cy="9" r="7.300" fill="#f4f4f4" stroke="#5a5a5a" stroke-width="1.400"/><path d="M9 5.500 V12.500 L5 9 Z M13 5.500 V12.500 L9 9 Z" fill="#222"/></svg><svg class="a" style="left:1217px;top:807px" width="18" height="18" viewBox="0 0 18 18"><circle cx="9" cy="9" r="7.300" fill="#f4f4f4" stroke="#5a5a5a" stroke-width="1.400"/><path d="M5.500 5.500 V12.500 L9.500 9 Z M9.500 5.500 V12.500 L13.500 9 Z" fill="#222"/></svg><svg class="a" style="left:1133px;top:808px" width="18" height="15" viewBox="0 0 18 15"><rect x="0.500" y="5.500" width="16" height="8" fill="#f4f4f4" stroke="#444"/><path d="M2 7.500 H15 M2 9.500 H15 M4 11.500 H13" stroke="#444" stroke-width="1" stroke-dasharray="1.500 .7"/><path d="M9 5.500 Q10 3 13.500 1" stroke="#444" fill="none"/></svg><div class="a" style="left:1172px;top:808px;font-size:13px;color:#000;letter-spacing:-0.3px">x5</div><div class="a" style="left:1199px;top:812px;width:0;height:0;border-top:4px solid transparent;border-bottom:4px solid transparent;border-left:5px solid #000"></div><div class="a" style="left:1240px;top:53px;width:1px;height:776px;background:#9a9a9a"></div><div class="a" style="left:1241px;top:53px;width:37px;height:776px;background:#000;overflow:hidden"><div class="a" style="left:0;top:0;width:37px;height:29px;box-sizing:border-box;border-top:1px solid #4e4e4e;border-bottom:1px solid #5a5a5a;background:linear-gradient(#3c3c3c 0,#2c2c2c 48%,#0a0a0a 54%,#000 100%);color:#f0f0f0;font-size:12px;text-align:center;line-height:28px">Auto</div><div class="a" style="left:2px;top:308px;width:34px;height:131px;background:linear-gradient(#fde725 0%,#d2e21b 12%,#8fd744 28%,#4ec36b 42%,#22a884 55%,#26828e 66%,#33638d 76%,#433e85 87%,#481a6c 96%,#440154 100%);border-top:1px solid #fff;border-bottom:1px solid #fff;box-sizing:border-box"></div><div class="a" style="left:0;width:37px;text-align:center;top:70.2px;font-size:9.500px;color:#c4c4c4;letter-spacing:-0.2px">-10</div><div class="a" style="left:0;width:37px;text-align:center;top:116.8px;font-size:9.500px;color:#c4c4c4;letter-spacing:-0.2px">-20</div><div class="a" style="left:0;width:37px;text-align:center;top:163.4px;font-size:9.500px;color:#c4c4c4;letter-spacing:-0.2px">-30</div><div class="a" style="left:0;width:37px;text-align:center;top:210.0px;font-size:9.500px;color:#c4c4c4;letter-spacing:-0.2px">-40</div><div class="a" style="left:0;width:37px;text-align:center;top:256.6px;font-size:9.500px;color:#c4c4c4;letter-spacing:-0.2px">-50</div><div class="a" style="left:5px;top:309.0px;width:28px;height:9.2px;border-radius:0 0 5px 5px;background:rgba(0,0,0,.5)"></div><div class="a" style="left:0;width:37px;text-align:center;top:303.2px;font-size:9.500px;color:#c8d4e8;letter-spacing:-0.2px">-60</div><div class="a" style="left:5px;top:346.8px;width:28px;height:18.0px;border-radius:5px;background:rgba(0,0,0,.5)"></div><div class="a" style="left:0;width:37px;text-align:center;top:349.8px;font-size:9.500px;color:#c8d4e8;letter-spacing:-0.2px">-70</div><div class="a" style="left:5px;top:393.4px;width:28px;height:18.0px;border-radius:5px;background:rgba(0,0,0,.5)"></div><div class="a" style="left:0;width:37px;text-align:center;top:396.4px;font-size:9.500px;color:#c8d4e8;letter-spacing:-0.2px">-80</div><div class="a" style="left:0;width:37px;text-align:center;top:443.0px;font-size:9.500px;color:#c4c4c4;letter-spacing:-0.2px">-90</div><div class="a" style="left:0;width:37px;text-align:center;top:489.6px;font-size:9.500px;color:#c4c4c4;letter-spacing:-0.2px">-100</div><div class="a" style="left:0;width:37px;text-align:center;top:536.2px;font-size:9.500px;color:#c4c4c4;letter-spacing:-0.2px">-110</div><div class="a" style="left:0;width:37px;text-align:center;top:582.8px;font-size:9.500px;color:#c4c4c4;letter-spacing:-0.2px">-120</div><div class="a" style="left:0;width:37px;text-align:center;top:629.4px;font-size:9.500px;color:#c4c4c4;letter-spacing:-0.2px">-130</div><div class="a" style="left:0;width:37px;text-align:center;top:676.0px;font-size:9.500px;color:#c4c4c4;letter-spacing:-0.2px">-140</div><div class="a" style="left:0;width:37px;text-align:center;top:722.6px;font-size:9.500px;color:#c4c4c4;letter-spacing:-0.2px">-150</div></div><div class="a" style="left:1278px;top:31px;width:2px;height:947px;background:#f2f3f8"></div><div class="a hdr" style="left:269px;top:834px;width:1009px;height:20px"></div><div class="a" style="left:273.00px;top:837.5px;font-size:11.5px;color:#111;white-space:nowrap;transform-origin:0 0;transform:scaleX(0.9880);">Geostationary Satellite Beacon</div><div class="tri-dn" style="left:1249px;top:842px;border-left-width:4.500px;border-right-width:4.500px;border-top-width:5px"></div><svg class="a" style="left:1265px;top:839px" width="10" height="10" viewBox="0 0 10 10"><path d="M1 1 L9 9 M9 1 L1 9" stroke="#111" stroke-width="1.500"/></svg><div class="a" style="left:269px;top:854px;width:1009px;height:124px;background:#000;overflow:hidden"><div class="a" style="left:0;top:-1px;width:1009px;height:125px"><div class="btn on" style="left:3px;top:4px;width:24px;height:23px;border-color:#5a5a5a;"><div class="glow" style="height:62%;background:radial-gradient(ellipse 50% 100% at 50% 100%,rgba(135,130,0,.95),rgba(110,105,0,.75) 60%,rgba(70,70,0,0) 100%)"></div><svg class="a" style="left:0;top:0" width="22" height="21" viewBox="0 0 22 21"><circle cx="11" cy="10.500" r="5.300" fill="none" stroke="#fff" stroke-width="1.300"/></svg></div><div class="btn on" style="left:3px;top:30px;width:24px;height:23px;border-color:#5a5a5a;"><div class="glow" style="height:62%;background:radial-gradient(ellipse 50% 100% at 50% 100%,rgba(135,130,0,.95),rgba(110,105,0,.75) 60%,rgba(70,70,0,0) 100%)"></div><svg class="a" style="left:0;top:0" width="22" height="21" viewBox="0 0 22 21"><path d="M6.500 5 L16 10.500 L6.500 16 Z" fill="#fff"/></svg></div><div class="btn" style="left:3px;top:63px;width:24px;height:23px;"><svg class="a" style="left:0;top:0" width="22" height="21" viewBox="0 0 22 21"><circle cx="11" cy="10.500" r="5" fill="none" stroke="#fff" stroke-width="1.300"/><path d="M11 5.500 V15.500 M6 10.500 H16" stroke="#fff" stroke-width="1.300"/></svg></div><div class="btn" style="left:3px;top:89px;width:24px;height:23px;"><svg class="a" style="left:0;top:0" width="22" height="21" viewBox="0 0 22 21"><circle cx="11" cy="10.500" r="5" fill="none" stroke="#8a8a8a" stroke-width="1.300"/><path d="M8 10.500 H14" stroke="#8a8a8a" stroke-width="1.300"/></svg></div><div class="btn" style="left:3px;top:121px;width:24px;height:23px;"><svg class="a" style="left:0;top:0" width="22" height="21" viewBox="0 0 22 21"></svg></div><div class="a" style="left:42px;top:4px;width:171px;height:118px;box-sizing:border-box;border:1px solid #4e4e4e;background:#111"></div><svg class="a" style="left:0;top:0" width="230" height="125" viewBox="269 853 230 125"><line x1="315.5" y1="858" x2="315.5" y2="974" stroke="#252525" stroke-width="1.500"/><line x1="335.5" y1="858" x2="335.5" y2="974" stroke="#252525" stroke-width="1.500"/><line x1="375.5" y1="858" x2="375.5" y2="974" stroke="#252525" stroke-width="1.500"/><line x1="395.5" y1="858" x2="395.5" y2="974" stroke="#252525" stroke-width="1.500"/><line x1="415.5" y1="858" x2="415.5" y2="974" stroke="#252525" stroke-width="1.500"/><line x1="435.5" y1="858" x2="435.5" y2="974" stroke="#252525" stroke-width="1.500"/><line x1="455.5" y1="858" x2="455.5" y2="974" stroke="#252525" stroke-width="1.500"/><line x1="475.5" y1="858" x2="475.5" y2="974" stroke="#252525" stroke-width="1.500"/><line x1="312" y1="877" x2="481" y2="877" stroke="#252525" stroke-width="1.500"/><line x1="312" y1="897" x2="481" y2="897" stroke="#252525" stroke-width="1.500"/><line x1="312" y1="917" x2="481" y2="917" stroke="#252525" stroke-width="1.500"/><line x1="312" y1="937" x2="481" y2="937" stroke="#252525" stroke-width="1.500"/><line x1="312" y1="957" x2="481" y2="957" stroke="#3c3c3c" stroke-width="1.500"/><rect x="354.700" y="858" width="2" height="116" fill="#b4c0c4"/></svg><div class="lab" style="left:130px;top:5px;font-size:8px;color:#e0e0e0;letter-spacing:.5px">0 s</div><div class="lab" style="left:131px;top:105px;font-size:8px;color:#777;letter-spacing:.5px">10 s</div><div class="a" style="left:85px;top:83px;width:88px;height:31px;border-radius:5px;background:rgba(8,8,8,.88)"></div><div class="a mono" style="left:91.500px;top:90.500px;font-size:11.500px;color:#f2f2f2;white-space:nowrap;letter-spacing:0">Δ +9,449 Hz</div><div class="a" style="left:222px;top:4px;width:786px;height:10px;background:linear-gradient(#8c8c8c 0,#5e5e5e 1px,#4a4a4a 35%,#2a2a2a 100%);overflow:hidden"><div class="a" style="left:-0.5px;top:1px;width:2px;height:3px;background:#959595"></div><div class="a" style="left:19.1px;top:1px;width:2px;height:2px;background:#959595"></div><div class="a" style="left:38.8px;top:1px;width:2px;height:3px;background:#959595"></div><div class="a" style="left:58.4px;top:1px;width:2px;height:2px;background:#959595"></div><div class="a" style="left:78.1px;top:1px;width:2px;height:3px;background:#959595"></div><div class="a" style="left:97.8px;top:1px;width:2px;height:2px;background:#959595"></div><div class="a" style="left:117.4px;top:1px;width:2px;height:3px;background:#959595"></div><div class="a" style="left:137.1px;top:1px;width:2px;height:2px;background:#959595"></div><div class="a" style="left:156.7px;top:1px;width:2px;height:3px;background:#959595"></div><div class="a" style="left:176.4px;top:1px;width:2px;height:2px;background:#959595"></div><div class="a" style="left:196.0px;top:1px;width:2px;height:3px;background:#959595"></div><div class="a" style="left:215.7px;top:1px;width:2px;height:2px;background:#959595"></div><div class="a" style="left:235.3px;top:1px;width:2px;height:3px;background:#959595"></div><div class="a" style="left:255.0px;top:1px;width:2px;height:2px;background:#959595"></div><div class="a" style="left:274.6px;top:1px;width:2px;height:3px;background:#959595"></div><div class="a" style="left:294.2px;top:1px;width:2px;height:2px;background:#959595"></div><div class="a" style="left:313.9px;top:1px;width:2px;height:3px;background:#959595"></div><div class="a" style="left:333.5px;top:1px;width:2px;height:2px;background:#959595"></div><div class="a" style="left:353.2px;top:1px;width:2px;height:3px;background:#959595"></div><div class="a" style="left:372.8px;top:1px;width:2px;height:2px;background:#959595"></div><div class="a" style="left:392.5px;top:1px;width:2px;height:3px;background:#959595"></div><div class="a" style="left:412.1px;top:1px;width:2px;height:2px;background:#959595"></div><div class="a" style="left:431.8px;top:1px;width:2px;height:3px;background:#959595"></div><div class="a" style="left:451.4px;top:1px;width:2px;height:2px;background:#959595"></div><div class="a" style="left:471.1px;top:1px;width:2px;height:3px;background:#959595"></div><div class="a" style="left:490.7px;top:1px;width:2px;height:2px;background:#959595"></div><div class="a" style="left:510.4px;top:1px;width:2px;height:3px;background:#959595"></div><div class="a" style="left:530.0px;top:1px;width:2px;height:2px;background:#959595"></div><div class="a" style="left:549.7px;top:1px;width:2px;height:3px;background:#959595"></div><div class="a" style="left:569.3px;top:1px;width:2px;height:2px;background:#959595"></div><div class="a" style="left:589.0px;top:1px;width:2px;height:3px;background:#959595"></div><div class="a" style="left:608.6px;top:1px;width:2px;height:2px;background:#959595"></div><div class="a" style="left:628.3px;top:1px;width:2px;height:3px;background:#959595"></div><div class="a" style="left:647.9px;top:1px;width:2px;height:2px;background:#959595"></div><div class="a" style="left:667.6px;top:1px;width:2px;height:3px;background:#959595"></div><div class="a" style="left:687.2px;top:1px;width:2px;height:2px;background:#959595"></div><div class="a" style="left:706.9px;top:1px;width:2px;height:3px;background:#959595"></div><div class="a" style="left:726.5px;top:1px;width:2px;height:2px;background:#959595"></div><div class="a" style="left:746.2px;top:1px;width:2px;height:3px;background:#959595"></div><div class="a" style="left:765.8px;top:1px;width:2px;height:2px;background:#959595"></div><div class="a" style="left:785.5px;top:1px;width:2px;height:3px;background:#959595"></div></div><div class="a" style="left:222px;top:24px;width:786px;height:98px;background:#440154;overflow:hidden"><svg class="a" style="left:0;top:0" width="787" height="98" viewBox="491 877 787 98"><defs><filter id="nz" x="0" y="0" width="100%" height="100%" color-interpolation-filters="sRGB"><feTurbulence type="fractalNoise" baseFrequency="0.83 0.91" numOctaves="2" seed="11"/><feColorMatrix type="matrix" values="0 0 0 0 0.36  0 0 0 0 0.30  0 0 0 0 0.66  3.6 0 0 0 -1.98"/></filter></defs><rect x="505" y="877" width="760" height="98" filter="url(#nz)"/><rect x="505" y="877" width="760" height="98" fill="#5a3a9a" opacity=".04"/><rect x="861" y="877" width="3" height="4" fill="#2a788e" opacity="0.80"/><rect x="861" y="881" width="1" height="4" fill="#35b779" opacity="0.62"/><rect x="862" y="887" width="3" height="6" fill="#1f9e89" opacity="0.73"/><rect x="861" y="894" width="2" height="6" fill="#2a788e" opacity="0.93"/><rect x="860" y="900" width="1" height="3" fill="#1f9e89" opacity="0.73"/><rect x="861" y="903" width="2" height="3" fill="#26828e" opacity="0.62"/><rect x="860" y="906" width="2" height="3" fill="#26828e" opacity="0.85"/><rect x="862" y="918" width="1" height="3" fill="#35b779" opacity="0.92"/><rect x="864" y="919" width="1" height="2" fill="#2a788e" opacity=".7"/><rect x="862" y="921" width="2" height="4" fill="#2a788e" opacity="0.76"/><rect x="861" y="929" width="2" height="3" fill="#35b779" opacity="0.77"/><rect x="860" y="934" width="3" height="4" fill="#1f9e89" opacity="0.85"/><rect x="862" y="943" width="1" height="9" fill="#1f9e89" opacity="0.82"/><rect x="860" y="957" width="1" height="9" fill="#26828e" opacity="0.64"/><rect x="865" y="958" width="1" height="7" fill="#2a788e" opacity=".7"/><rect x="862" y="967" width="2" height="4" fill="#35b779" opacity="0.93"/><rect x="861" y="971" width="2" height="4" fill="#1f9e89" opacity="0.93"/><rect x="865" y="972" width="1" height="2" fill="#2a788e" opacity=".7"/><rect x="989" y="938" width="2" height="1" fill="#35b779" opacity="0.57"/><rect x="999" y="953" width="2" height="2" fill="#26828e" opacity="0.92"/><rect x="995" y="919" width="2" height="1" fill="#1f9e89" opacity="0.62"/><rect x="987" y="948" width="2" height="1" fill="#1f9e89" opacity="0.58"/><rect x="995" y="972" width="2" height="3" fill="#1f9e89" opacity="0.66"/><rect x="990" y="953" width="3" height="2" fill="#31688e" opacity="0.67"/><rect x="998" y="916" width="2" height="2" fill="#35b779" opacity="0.93"/><rect x="994" y="911" width="3" height="3" fill="#2a788e" opacity="0.56"/><rect x="997" y="946" width="2" height="1" fill="#2a788e" opacity="0.61"/><rect x="996" y="962" width="2" height="2" fill="#1f9e89" opacity="0.70"/><rect x="993" y="948" width="1" height="1" fill="#1f9e89" opacity="0.89"/><rect x="996" y="893" width="2" height="3" fill="#31688e" opacity="0.61"/><rect x="994" y="915" width="2" height="1" fill="#2a788e" opacity="0.80"/><rect x="995" y="902" width="2" height="2" fill="#1f9e89" opacity="0.77"/><rect x="988" y="964" width="1" height="2" fill="#1f9e89" opacity="0.70"/><rect x="997" y="916" width="1" height="1" fill="#35b779" opacity="0.75"/><rect x="997" y="959" width="2" height="3" fill="#31688e" opacity="0.93"/><rect x="998" y="903" width="2" height="2" fill="#31688e" opacity="0.81"/><rect x="993" y="932" width="1" height="2" fill="#35b779" opacity="0.84"/><rect x="991" y="954" width="3" height="3" fill="#26828e" opacity="0.76"/><rect x="987" y="885" width="3" height="1" fill="#31688e" opacity="0.57"/><rect x="995" y="902" width="2" height="2" fill="#1f9e89" opacity="0.58"/><rect x="988" y="947" width="3" height="3" fill="#35b779" opacity="0.73"/><rect x="987" y="888" width="1" height="2" fill="#1f9e89" opacity="0.65"/><rect x="998" y="912" width="2" height="2" fill="#1f9e89" opacity="0.86"/><rect x="995" y="973" width="2" height="2" fill="#26828e" opacity="0.74"/><rect x="999" y="927" width="3" height="2" fill="#1f9e89" opacity="0.88"/><rect x="998" y="956" width="2" height="1" fill="#31688e" opacity="0.65"/><rect x="999" y="945" width="2" height="2" fill="#31688e" opacity="0.72"/><rect x="995" y="903" width="2" height="2" fill="#31688e" opacity="0.55"/><rect x="989" y="930" width="2" height="2" fill="#2a788e" opacity="0.58"/><rect x="988" y="922" width="2" height="2" fill="#26828e" opacity="0.94"/><rect x="996" y="969" width="2" height="2" fill="#1f9e89" opacity="0.92"/><rect x="997" y="898" width="1" height="2" fill="#1f9e89" opacity="0.83"/><rect x="999" y="916" width="2" height="2" fill="#1f9e89" opacity="0.82"/><rect x="988" y="924" width="2" height="3" fill="#35b779" opacity="0.69"/><rect x="989" y="965" width="1" height="2" fill="#26828e" opacity="0.73"/><rect x="990" y="946" width="3" height="2" fill="#26828e" opacity="0.63"/><rect x="999" y="908" width="1" height="1" fill="#2a788e" opacity="0.78"/><rect x="996" y="934" width="2" height="2" fill="#31688e" opacity="0.62"/><rect x="990" y="909" width="2" height="2" fill="#31688e" opacity="0.55"/><rect x="988" y="915" width="1" height="3" fill="#1f9e89" opacity="0.85"/><rect x="996" y="938" width="1" height="1" fill="#2a788e" opacity="0.76"/><rect x="997" y="884" width="2" height="1" fill="#2a788e" opacity="0.66"/><rect x="998" y="908" width="1" height="1" fill="#26828e" opacity="0.90"/><rect x="991" y="884" width="3" height="2" fill="#1f9e89" opacity="0.59"/><rect x="997" y="956" width="1" height="2" fill="#1f9e89" opacity="0.68"/><rect x="993" y="954" width="2" height="1" fill="#1f9e89" opacity="0.93"/><rect x="994" y="963" width="2" height="2" fill="#2a788e" opacity="0.90"/><rect x="988" y="949" width="2" height="2" fill="#2a788e" opacity="0.81"/><rect x="989" y="928" width="2" height="3" fill="#31688e" opacity="0.52"/><rect x="996" y="947" width="1" height="2" fill="#2a788e" opacity="0.85"/><rect x="996" y="941" width="3" height="1" fill="#31688e" opacity="0.68"/><rect x="994" y="902" width="3" height="3" fill="#2a788e" opacity="0.56"/><rect x="987" y="966" width="1" height="2" fill="#26828e" opacity="0.93"/><rect x="996" y="939" width="1" height="2" fill="#1f9e89" opacity="0.87"/><rect x="989" y="885" width="3" height="2" fill="#2a788e" opacity="0.62"/><rect x="998" y="973" width="2" height="3" fill="#35b779" opacity="0.57"/><rect x="998" y="920" width="1" height="1" fill="#35b779" opacity="0.57"/><rect x="996" y="960" width="1" height="3" fill="#1f9e89" opacity="0.95"/><rect x="995" y="946" width="3" height="3" fill="#26828e" opacity="0.79"/><rect x="989" y="942" width="2" height="1" fill="#26828e" opacity="0.61"/><rect x="995" y="966" width="3" height="2" fill="#2a788e" opacity="0.58"/><rect x="996" y="880" width="3" height="2" fill="#1f9e89" opacity="0.61"/><rect x="990" y="884" width="1" height="1" fill="#31688e" opacity="0.76"/><rect x="987" y="879" width="3" height="2" fill="#31688e" opacity="0.61"/><rect x="994" y="949" width="2" height="1" fill="#35b779" opacity="0.75"/><rect x="991" y="918" width="2" height="3" fill="#35b779" opacity="0.72"/><rect x="987" y="893" width="2" height="1" fill="#2a788e" opacity="0.75"/><rect x="990" y="970" width="3" height="2" fill="#26828e" opacity="0.75"/><rect x="998" y="967" width="2" height="3" fill="#26828e" opacity="0.74"/><rect x="999" y="880" width="1" height="2" fill="#2a788e" opacity="0.77"/><rect x="990" y="964" width="3" height="1" fill="#1f9e89" opacity="0.92"/><rect x="987" y="967" width="2" height="3" fill="#35b779" opacity="0.71"/><rect x="987" y="930" width="3" height="2" fill="#31688e" opacity="0.89"/><rect x="988" y="929" width="2" height="1" fill="#26828e" opacity="0.89"/><rect x="990" y="914" width="2" height="2" fill="#26828e" opacity="0.63"/><rect x="999" y="955" width="2" height="3" fill="#26828e" opacity="0.84"/><rect x="994" y="951" width="2" height="3" fill="#31688e" opacity="0.69"/><rect x="999" y="945" width="2" height="2" fill="#26828e" opacity="0.85"/><rect x="996" y="899" width="2" height="3" fill="#1f9e89" opacity="0.58"/><rect x="991" y="939" width="2" height="1" fill="#1f9e89" opacity="0.87"/><rect x="995" y="947" width="3" height="1" fill="#2a788e" opacity="0.51"/><rect x="990" y="940" width="2" height="1" fill="#26828e" opacity="0.71"/><rect x="997" y="972" width="3" height="2" fill="#1f9e89" opacity="0.68"/><rect x="999" y="929" width="3" height="1" fill="#26828e" opacity="0.92"/><rect x="991" y="914" width="1" height="2" fill="#2a788e" opacity="0.94"/><rect x="995" y="930" width="2" height="2" fill="#31688e" opacity="0.51"/><rect x="996" y="911" width="2" height="1" fill="#2a788e" opacity="0.89"/><rect x="999" y="943" width="3" height="2" fill="#35b779" opacity="0.65"/><rect x="994" y="887" width="2" height="1" fill="#1f9e89" opacity="0.56"/><rect x="996" y="967" width="2" height="3" fill="#2a788e" opacity="0.93"/><rect x="989" y="937" width="1" height="2" fill="#1f9e89" opacity="0.80"/><rect x="998" y="941" width="2" height="3" fill="#2a788e" opacity="0.91"/><rect x="997" y="919" width="2" height="2" fill="#31688e" opacity="0.54"/><rect x="987" y="889" width="1" height="2" fill="#1f9e89" opacity="0.53"/><rect x="996" y="929" width="1" height="2" fill="#35b779" opacity="0.72"/><rect x="989" y="943" width="2" height="1" fill="#31688e" opacity="0.86"/><rect x="987" y="883" width="2" height="2" fill="#26828e" opacity="0.90"/><rect x="997" y="966" width="2" height="1" fill="#35b779" opacity="0.67"/><rect x="996" y="945" width="2" height="2" fill="#1f9e89" opacity="0.56"/><rect x="990" y="930" width="1" height="2" fill="#2a788e" opacity="0.55"/><rect x="990" y="880" width="1" height="2" fill="#1f9e89" opacity="0.78"/><rect x="998" y="899" width="2" height="2" fill="#1f9e89" opacity="0.89"/><rect x="988" y="963" width="3" height="1" fill="#1f9e89" opacity="0.71"/><rect x="989" y="906" width="2" height="1" fill="#2a788e" opacity="0.90"/><rect x="995" y="944" width="2" height="2" fill="#35b779" opacity="0.78"/><rect x="987" y="911" width="2" height="3" fill="#26828e" opacity="0.82"/><rect x="999" y="965" width="2" height="2" fill="#26828e" opacity="0.71"/><rect x="999" y="882" width="2" height="1" fill="#35b779" opacity="0.70"/><rect x="995" y="895" width="2" height="2" fill="#26828e" opacity="0.72"/><rect x="997" y="925" width="1" height="2" fill="#26828e" opacity="0.70"/><rect x="990" y="965" width="1" height="3" fill="#31688e" opacity="0.92"/><rect x="989" y="967" width="3" height="2" fill="#2a788e" opacity="0.92"/><rect x="987" y="908" width="2" height="1" fill="#35b779" opacity="0.88"/><rect x="994" y="935" width="2" height="2" fill="#1f9e89" opacity="0.79"/><rect x="991" y="957" width="1" height="1" fill="#31688e" opacity="0.58"/><rect x="995" y="964" width="2" height="2" fill="#31688e" opacity="0.71"/><rect x="995" y="914" width="2" height="3" fill="#26828e" opacity="0.88"/><rect x="997" y="969" width="2" height="1" fill="#26828e" opacity="0.90"/><rect x="993" y="951" width="3" height="2" fill="#35b779" opacity="0.77"/><rect x="995" y="944" width="2" height="1" fill="#1f9e89" opacity="0.81"/><rect x="987" y="942" width="2" height="3" fill="#26828e" opacity="0.52"/><rect x="993" y="938" width="1" height="2" fill="#35b779" opacity="0.77"/><rect x="987" y="884" width="3" height="3" fill="#26828e" opacity="0.69"/><rect x="987" y="894" width="2" height="2" fill="#1f9e89" opacity="0.61"/><rect x="988" y="886" width="2" height="2" fill="#31688e" opacity="0.79"/><rect x="999" y="935" width="3" height="1" fill="#2a788e" opacity="0.75"/><rect x="994" y="943" width="3" height="3" fill="#1f9e89" opacity="0.76"/><rect x="989" y="944" width="2" height="3" fill="#1f9e89" opacity="0.62"/><rect x="990" y="909" width="2" height="2" fill="#1f9e89" opacity="0.51"/><rect x="989" y="941" width="1" height="2" fill="#31688e" opacity="0.56"/><rect x="999" y="898" width="3" height="1" fill="#26828e" opacity="0.93"/><rect x="996" y="919" width="1" height="2" fill="#26828e" opacity="0.90"/><rect x="998" y="939" width="2" height="3" fill="#26828e" opacity="0.70"/><rect x="998" y="966" width="1" height="1" fill="#35b779" opacity="0.94"/><rect x="998" y="919" width="3" height="3" fill="#31688e" opacity="0.68"/><rect x="997" y="929" width="3" height="2" fill="#31688e" opacity="0.73"/><rect x="999" y="914" width="3" height="2" fill="#26828e" opacity="0.78"/><rect x="991" y="903" width="3" height="2" fill="#26828e" opacity="0.93"/><rect x="993" y="881" width="2" height="2" fill="#2a788e" opacity="0.89"/><rect x="998" y="920" width="2" height="3" fill="#2a788e" opacity="0.59"/><rect x="990" y="953" width="3" height="2" fill="#35b779" opacity="0.56"/><rect x="988" y="893" width="3" height="1" fill="#1f9e89" opacity="0.72"/><rect x="998" y="938" width="2" height="1" fill="#1f9e89" opacity="0.54"/><rect x="994" y="916" width="3" height="2" fill="#26828e" opacity="0.63"/><rect x="994" y="945" width="2" height="1" fill="#1f9e89" opacity="0.80"/><rect x="997" y="878" width="3" height="1" fill="#31688e" opacity="0.64"/><rect x="988" y="937" width="3" height="2" fill="#2a788e" opacity="0.83"/><rect x="995" y="952" width="1" height="3" fill="#35b779" opacity="0.84"/><rect x="990" y="894" width="2" height="3" fill="#35b779" opacity="0.71"/><rect x="994" y="898" width="2" height="2" fill="#31688e" opacity="0.84"/><rect x="994" y="901" width="1" height="2" fill="#1f9e89" opacity="0.66"/><rect x="991" y="901" width="2" height="2" fill="#1f9e89" opacity="0.70"/><rect x="999" y="941" width="3" height="2" fill="#1f9e89" opacity="0.92"/><rect x="995" y="960" width="3" height="3" fill="#35b779" opacity="0.78"/><rect x="998" y="932" width="3" height="2" fill="#26828e" opacity="0.65"/><rect x="987" y="910" width="2" height="2" fill="#31688e" opacity="0.88"/><rect x="995" y="911" width="1" height="1" fill="#35b779" opacity="0.80"/><rect x="987" y="929" width="2" height="1" fill="#26828e" opacity="0.79"/><rect x="997" y="910" width="2" height="3" fill="#1f9e89" opacity="0.61"/><rect x="999" y="912" width="1" height="2" fill="#26828e" opacity="0.68"/><rect x="993" y="921" width="2" height="1" fill="#1f9e89" opacity="0.76"/><rect x="996" y="928" width="1" height="1" fill="#31688e" opacity="0.71"/><rect x="989" y="922" width="2" height="3" fill="#1f9e89" opacity="0.87"/><rect x="990" y="892" width="2" height="1" fill="#1f9e89" opacity="0.54"/><rect x="990" y="923" width="2" height="1" fill="#1f9e89" opacity="0.92"/><rect x="993" y="931" width="1" height="3" fill="#26828e" opacity="0.93"/><rect x="998" y="947" width="3" height="2" fill="#2a788e" opacity="0.79"/><rect x="991" y="958" width="2" height="3" fill="#2a788e" opacity="0.93"/><rect x="918" y="877" width="7" height="98" fill="#000"/><rect x="919" y="881" width="1" height="89" fill="#b4cc22"/><rect x="923" y="881" width="1" height="89" fill="#b4cc22"/><rect x="920" y="881" width="3" height="89" fill="#2a8f86"/><rect x="921" y="881" width="1" height="89" fill="#36aa7a"/><line x1="918.500" y1="881" x2="918.500" y2="971" stroke="#fff" stroke-width="1" stroke-dasharray="2 2"/><line x1="924.500" y1="881" x2="924.500" y2="971" stroke="#fff" stroke-width="1" stroke-dasharray="2 2"/><rect x="918" y="877" width="7" height="4.500" fill="#fff"/><rect x="918" y="970" width="7" height="5" fill="#8a8a8a"/><circle cx="515.500" cy="950.300" r="18.200" fill="#14021f" fill-opacity=".93" stroke="#85955a" stroke-width="1.400"/><path d="M515.500 949 L512.300 933" stroke="#2a2a1a" stroke-width="1"/><path d="M515.500 949 L512 968 L514.500 968.500 L515.500 958 L516.500 968.500 L519 968 Z" fill="#7fff00"/><rect x="497" y="939" width="3.600" height="6" rx="1.500" transform="rotate(25 499 942)" fill="#7fff00"/></svg><div class="a" style="left:293px;top:62px;width:200px;height:36px;border-radius:6px;background:rgba(14,0,24,.86)"></div><div class="a mono" style="left:302px;top:73.500px;font-size:13.600px;color:#f4f4f4;white-space:nowrap">Beacon: 10.489.759.438</div></div><div class="a" style="left:222px;top:14px;width:786px;height:10px;background:#000"></div><div class="a" style="left:395.75px;top:9.7px;font-size:11px;color:#f4f4f4;white-space:nowrap;transform-origin:0 0;transform:scaleX(0.8559);">10489.700</div><div class="a" style="left:593.25px;top:9.7px;font-size:11px;color:#f4f4f4;white-space:nowrap;transform-origin:0 0;transform:scaleX(0.8559);">10489.750</div><div class="a" style="left:789.25px;top:9.7px;font-size:11px;color:#f4f4f4;white-space:nowrap;transform-origin:0 0;transform:scaleX(0.8559);">10489.800</div></div></div><div class="a" style="left:0;top:978px;width:1280px;height:24px;background:#f0f0f0;overflow:hidden"><div class="a" style="left:9.30px;top:5.5px;font-size:11.5px;color:#5a5a5a;white-space:nowrap;transform-origin:0 0;transform:scaleX(0.9274);">RSP1A, BW = 1.000 MHz</div><div class="a" style="left:823.80px;top:5.5px;font-size:11.5px;color:#1a1a1a;white-space:nowrap;transform-origin:0 0;transform:scaleX(0.8898);">. CPU: 1.8%</div><div class="a" style="left:978.40px;top:5.5px;font-size:11.5px;color:#1a1a1a;white-space:nowrap;transform-origin:0 0;transform:scaleX(0.9735);">Audio: 0ms</div><div class="a" style="left:1133.00px;top:5.5px;font-size:11.5px;color:#1a1a1a;white-space:nowrap;transform-origin:0 0;transform:scaleX(0.9139);">Size: 1.1 GB</div><div class="sb" style="left:894px;width:70px"></div><div class="sb" style="left:1049px;width:70px"></div><div class="sb" style="left:1205px;width:70px"></div><div class="a" style="left:1208px;top:9px;width:4px;height:7px;background:#06b025"></div></div></body></html>
